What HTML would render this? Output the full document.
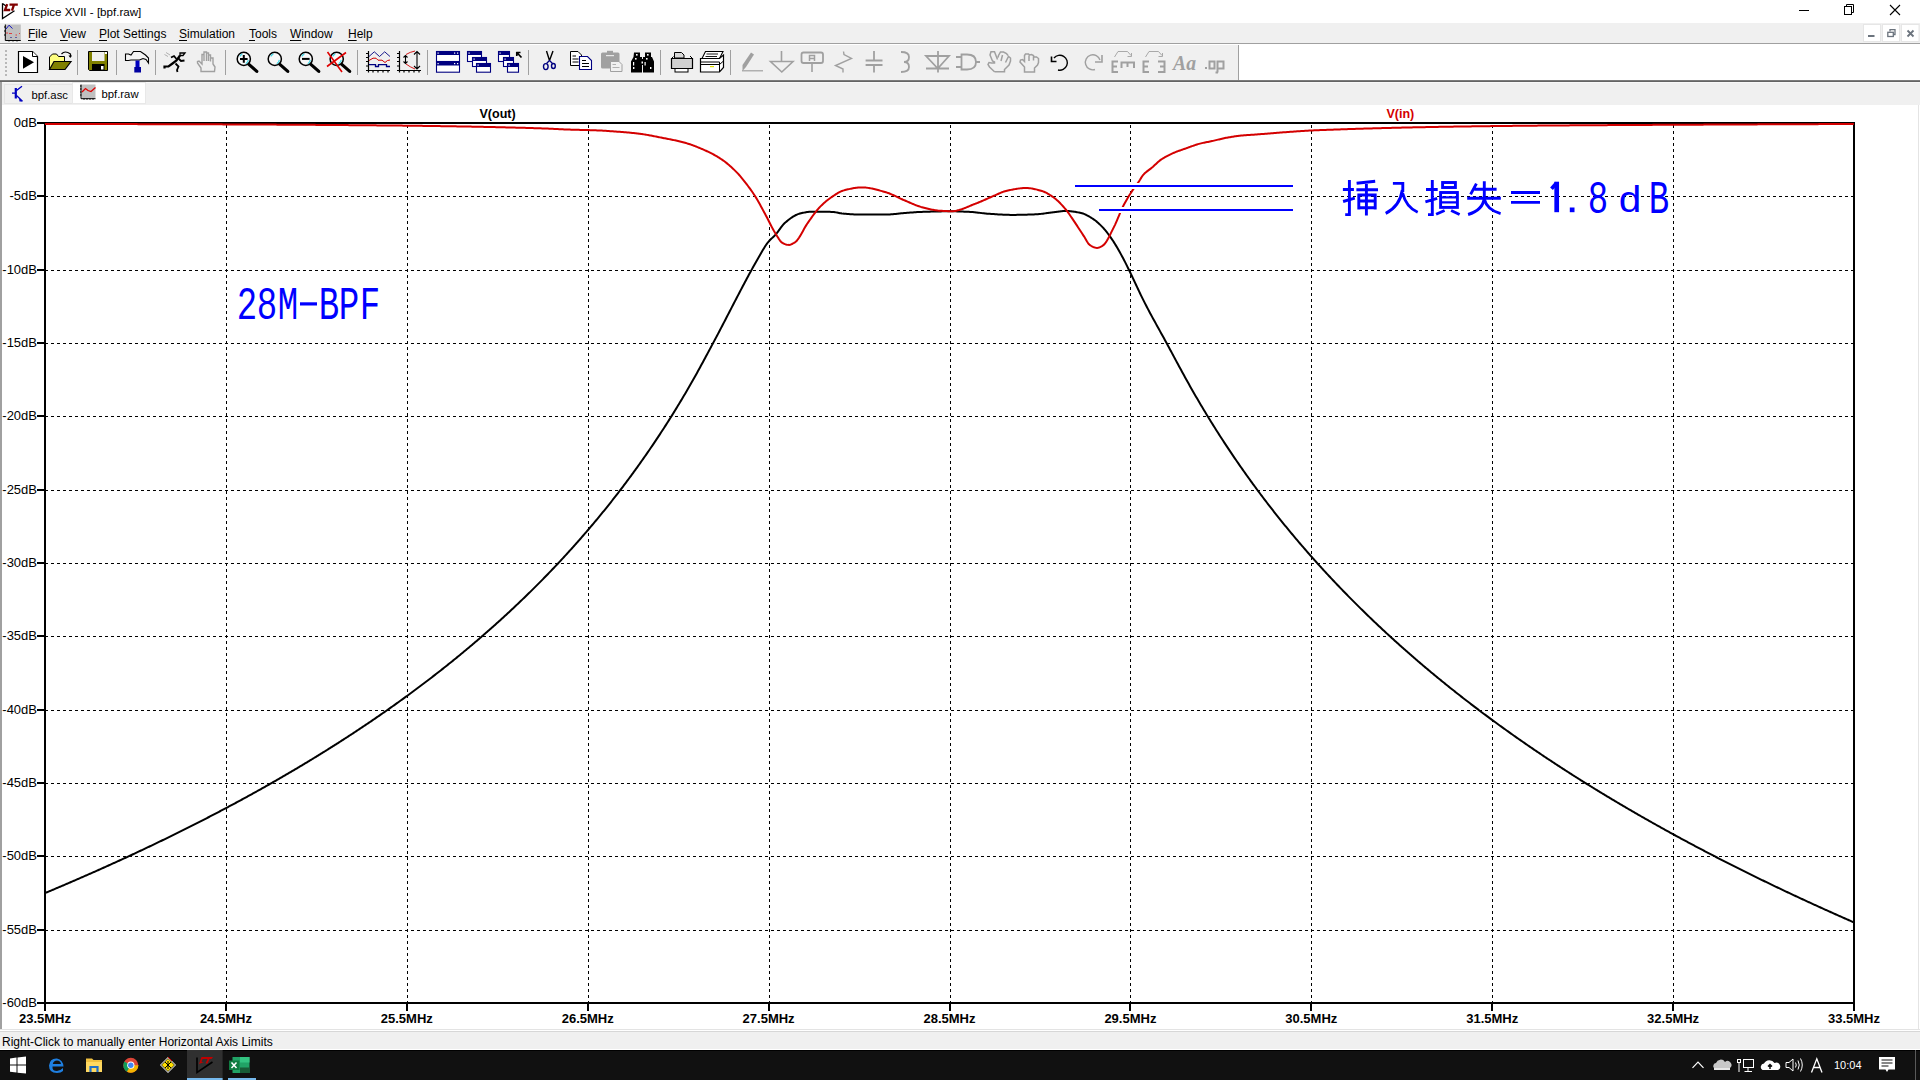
<!DOCTYPE html>
<html><head><meta charset="utf-8"><style>
html,body{margin:0;padding:0}
body{width:1920px;height:1080px;overflow:hidden;position:relative;background:#fff;font-family:"Liberation Sans",sans-serif}
.abs{position:absolute}
.yl{position:absolute;left:0;width:37px;text-align:right;font-size:13px;line-height:16px;color:#000}
.xl{position:absolute;top:1011px;width:80px;text-align:center;font-size:13px;font-weight:bold;line-height:16px;color:#000}
.g{stroke:#000;stroke-width:1;stroke-dasharray:3 3;shape-rendering:crispEdges}
.menu{position:absolute;top:25.5px;font-size:12px;line-height:16px;color:#000}
.menu u{text-decoration:underline;text-decoration-thickness:1px;text-underline-offset:1.5px}
.big{position:absolute;width:20.5px;text-align:center;font-family:"Liberation Mono",monospace;font-size:46px;line-height:50px;color:#00f;transform:scaleX(0.74);transform-origin:50% 50%}
</style></head><body>
<div class="abs" style="left:0;top:23px;width:1920px;height:20px;background:#f0f0f0;border-bottom:1px solid #a0a0a0"></div>
<div class="abs" style="left:0;top:45px;width:1238px;height:35px;background:#f0f0f0;border-right:1px solid #a0a0a0"></div>
<div class="abs" style="left:0;top:80px;width:1920px;height:1px;background:#7c7c7c"></div>
<div class="abs" style="left:0;top:81px;width:1920px;height:1px;background:#646464"></div>
<div class="abs" style="left:0;top:82px;width:1920px;height:1px;background:#f8f8f8"></div>
<div class="abs" style="left:0;top:83px;width:1920px;height:22px;background:#f0f0f0"></div>
<div class="abs" style="left:0;top:82px;width:2px;height:947px;background:#a0a0a0"></div>
<div class="abs" style="left:1918px;top:105px;width:1px;height:925px;background:#e4e4e4"></div>
<div class="abs" style="left:0;top:1029px;width:1920px;height:1px;background:#e3e3e3"></div>
<div class="abs" style="left:0;top:1030px;width:1920px;height:1px;background:#fff"></div>
<div class="abs" style="left:0;top:1031px;width:1920px;height:1px;background:#d7d7d7"></div>
<div class="abs" style="left:0;top:1032px;width:1920px;height:17px;background:#f0f0f0"></div>
<div class="abs" style="left:0;top:1050px;width:1920px;height:1px;background:#000"></div>
<div class="abs" style="left:0;top:1051px;width:1920px;height:29px;background:#111"></div>
<div class="abs" style="left:23px;top:4px;font-size:11.6px;line-height:16px;color:#000">LTspice XVII - [bpf.raw]</div>
<div class="menu" style="left:28px"><u>F</u>ile</div>
<div class="menu" style="left:60px"><u>V</u>iew</div>
<div class="menu" style="left:99px"><u>P</u>lot Settings</div>
<div class="menu" style="left:179px"><u>S</u>imulation</div>
<div class="menu" style="left:249px"><u>T</u>ools</div>
<div class="menu" style="left:290px"><u>W</u>indow</div>
<div class="menu" style="left:348px"><u>H</u>elp</div>
<div class="abs" style="left:2px;top:1034px;font-size:12px;line-height:16px;color:#000">Right-Click to manually enter Horizontal Axis Limits</div>
<div class="abs" style="left:1834px;top:1058px;font-size:11px;line-height:14px;color:#fff">10:04</div>
<svg class="abs" style="left:0;top:0" width="1920" height="1080" viewBox="0 0 1920 1080">
<rect x="5" y="50" width="2" height="2" fill="#b8b8b8"/>
<rect x="5" y="54" width="2" height="2" fill="#b8b8b8"/>
<rect x="5" y="58" width="2" height="2" fill="#b8b8b8"/>
<rect x="5" y="62" width="2" height="2" fill="#b8b8b8"/>
<rect x="5" y="66" width="2" height="2" fill="#b8b8b8"/>
<rect x="5" y="70" width="2" height="2" fill="#b8b8b8"/>
<rect x="5" y="74" width="2" height="2" fill="#b8b8b8"/>
<path d="M18.5,51.5H32.5L37.5,56.5V72.5H18.5Z" fill="#fff" stroke="#000" stroke-width="1.2"/>
<path d="M32.5,51.5V56.5H37.5" fill="#fff" stroke="#000" stroke-width="1"/>
<path d="M23,56L34,62.3L23,68.8Z" fill="#000"/>
<path d="M49.5,69.5V57L52.5,54H56.5L58.5,56.5H64.5V61.5" fill="#ffff80" stroke="#000" stroke-width="1"/>
<path d="M49.5,69.5L54,61.5H71L65,69.5Z" fill="#808000" stroke="#000" stroke-width="1.2"/>
<path d="M61.5,54Q65,50 70.5,54V57" fill="none" stroke="#000" stroke-width="1.2"/>
<path d="M68.5,55.5H72L70.3,58Z" fill="#000"/>
<rect x="77" y="50" width="1" height="25" fill="#a0a0a0"/>
<path d="M88.5,51.5H107.5V70.5H89.5L88.5,69.5Z" fill="#808000" stroke="#000" stroke-width="1"/>
<rect x="92" y="52" width="12.5" height="9" fill="#f0f0f0"/>
<rect x="92" y="64" width="12.5" height="6.5" fill="#000"/>
<rect x="101" y="66" width="2.5" height="3.5" fill="#fff"/>
<rect x="105" y="52" width="2" height="2" fill="#fff"/>
<rect x="116" y="50" width="1" height="25" fill="#a0a0a0"/>
<path d="M125.5,54H128.5L131,55L133.5,51.5H140.5L145.5,55L148.5,58L148.5,63L146,59.5L143,58.5L139.5,60H131L128.5,60.5H125.5Z" fill="#f4f4f4" stroke="#000" stroke-width="1.1"/>
<rect x="135.5" y="60.5" width="4" height="7" fill="#0000c0"/>
<rect x="134.3" y="67" width="6.7" height="5.5" fill="#0000a0"/>
<rect x="155" y="50" width="1" height="25" fill="#a0a0a0"/>
<path d="M180,53H185L183,55.5H180Z" fill="#fff" stroke="#000" stroke-width="1.3"/>
<path d="M180,55.5L176.5,60.5L172.5,63.5L168.5,66.5H164.5V68.5" fill="none" stroke="#000" stroke-width="2.2"/>
<path d="M171,57.5L174,56L176.5,59M178.5,58.5L181,61L184.5,60.5M175.5,63.5L178.5,66.5L177,70L177.5,72" fill="none" stroke="#000" stroke-width="1.8"/>
<path d="M164.5,54.5L168,56.5M166,52.5L170,55" stroke="#a0a0a0" stroke-width="0.8"/>
<path d="M201,71.5V68L197.5,63V61.5L199,61L202,64V54.5H204V61V52H206.5V61V53H208.5V61V55H210.5V61.5V58H213V64L215,67L214.5,71.5Z" fill="none" stroke="#a0a0a0" stroke-width="1.4"/>
<rect x="225" y="50" width="1" height="25" fill="#a0a0a0"/>
<path d="M248.3,63.9L256.8,71.4" stroke="#000" stroke-width="3.2" stroke-linecap="round"/>
<circle cx="243.8" cy="58.9" r="6.6" fill="#f8f8f8" stroke="#000" stroke-width="1.5"/>
<path d="M239.8,56.4A5,5 0 0 1 242.3,54.1M248.3,59.9A5,5 0 0 1 245.8,63.699999999999996" fill="none" stroke="#40d8e8" stroke-width="1.2"/><path d="M240,58.9H247.6M243.8,55.1V62.7" stroke="#000" stroke-width="2"/>
<path d="M279.3,63.9L287.8,71.4" stroke="#000" stroke-width="3.2" stroke-linecap="round"/>
<circle cx="274.8" cy="58.9" r="6.6" fill="#f8f8f8" stroke="#000" stroke-width="1.5"/>
<path d="M270.8,56.4A5,5 0 0 1 273.3,54.1M279.3,59.9A5,5 0 0 1 276.8,63.699999999999996" fill="none" stroke="#40d8e8" stroke-width="1.2"/>
<path d="M310.3,63.9L318.8,71.4" stroke="#000" stroke-width="3.2" stroke-linecap="round"/>
<circle cx="305.8" cy="58.9" r="6.6" fill="#f8f8f8" stroke="#000" stroke-width="1.5"/>
<path d="M301.8,56.4A5,5 0 0 1 304.3,54.1M310.3,59.9A5,5 0 0 1 307.8,63.699999999999996" fill="none" stroke="#40d8e8" stroke-width="1.2"/><path d="M302,58.9H309.6" stroke="#000" stroke-width="2"/>
<path d="M341.2,63.9L349.7,71.4" stroke="#000" stroke-width="3.2" stroke-linecap="round"/>
<circle cx="336.7" cy="58.9" r="6.6" fill="#f8f8f8" stroke="#000" stroke-width="1.5"/>
<path d="M332.7,56.4A5,5 0 0 1 335.2,54.1M341.2,59.9A5,5 0 0 1 338.7,63.699999999999996" fill="none" stroke="#40d8e8" stroke-width="1.2"/><path d="M327.5,52L342,72M346,52.5L327,66.5" stroke="#e00000" stroke-width="1.6"/>
<rect x="357" y="50" width="1" height="25" fill="#a0a0a0"/>
<path d="M368.5,51V72.5M366,70.5H390M366,53.5H368.5M366,57.5H368.5M366,61.5H368.5M366,66H368.5M373,70.5V72.5M378,70.5V72.5M383,70.5V72.5M388,70.5V72.5" stroke="#000" stroke-width="1.2" fill="none"/>
<path d="M369,56.5L374.3,51.8L379.5,56.5L384.7,51.8L390,56.5" stroke="#000080" stroke-width="0.9" fill="none"/>
<path d="M369,60.5L373,58.2H376L378,60.2H382L385,62.5L387.5,60.5L390,60" stroke="#d00000" stroke-width="1" fill="none"/>
<path d="M369,64.6H375.5V66.5H378.5V64.6H386.5V66.5H390" stroke="#000080" stroke-width="1.3" fill="none"/>
<path d="M399.5,51V72.5M397,70.5H421M397,53.5H399.5M397,57.5H399.5M397,61.5H399.5M397,66H399.5M404,70.5V72.5M409,70.5V72.5M414,70.5V72.5M419,70.5V72.5" stroke="#000" stroke-width="1.2" fill="none"/>
<path d="M406,54.5Q410,52 415,51M406,64Q410,67 415,69" stroke="#d00000" stroke-width="0.9" fill="none"/>
<path d="M405.5,55.5V63.5M403.5,57.5L405.5,55.5L407.5,57.5M403.5,61.5L405.5,63.5L407.5,61.5M417,51.5V69M414,54.5L417,51.5L420,54.5M414,66L417,69L420,66" stroke="#000" stroke-width="1.1" fill="none"/>
<rect x="427" y="50" width="1" height="25" fill="#a0a0a0"/>
<rect x="436.5" y="51.5" width="23" height="10" fill="#fff" stroke="#000080" stroke-width="1.1"/><rect x="436" y="51" width="24" height="4" fill="#000080"/><rect x="437.5" y="52.5" width="1.2" height="1.2" fill="#fff"/><rect x="436.5" y="62.0" width="23" height="10.2" fill="#fff" stroke="#000080" stroke-width="1.1"/><rect x="436" y="61.5" width="24" height="4" fill="#000080"/><rect x="437.5" y="63.0" width="1.2" height="1.2" fill="#fff"/><rect x="454" y="52.5" width="1.2" height="1.2" fill="#fff"/><rect x="457" y="52.5" width="1.2" height="1.2" fill="#fff"/><rect x="454" y="63" width="1.2" height="1.2" fill="#fff"/><rect x="457" y="63" width="1.2" height="1.2" fill="#fff"/>
<rect x="467.5" y="51.5" width="14" height="10" fill="#fff" stroke="#000080" stroke-width="1.1"/><rect x="467" y="51" width="15" height="4" fill="#000080"/><rect x="468.5" y="52.5" width="1.2" height="1.2" fill="#fff"/><rect x="472.5" y="57.5" width="14" height="9" fill="#fff" stroke="#000080" stroke-width="1.1"/><rect x="472" y="57" width="15" height="4" fill="#000080"/><rect x="473.5" y="58.5" width="1.2" height="1.2" fill="#fff"/><rect x="476.5" y="63.5" width="14" height="8.7" fill="#fff" stroke="#000080" stroke-width="1.1"/><rect x="476" y="63" width="15" height="4" fill="#000080"/><rect x="477.5" y="64.5" width="1.2" height="1.2" fill="#fff"/>
<rect x="498.5" y="51.5" width="11" height="10" fill="#fff" stroke="#000080" stroke-width="1.1"/><rect x="498" y="51" width="12" height="4" fill="#000080"/><rect x="499.5" y="52.5" width="1.2" height="1.2" fill="#fff"/><rect x="503.5" y="57.5" width="10" height="9" fill="#fff" stroke="#000080" stroke-width="1.1"/><rect x="503" y="57" width="11" height="4" fill="#000080"/><rect x="504.5" y="58.5" width="1.2" height="1.2" fill="#fff"/><rect x="507.5" y="63.5" width="11" height="8.7" fill="#fff" stroke="#000080" stroke-width="1.1"/><rect x="507" y="63" width="12" height="4" fill="#000080"/><rect x="508.5" y="64.5" width="1.2" height="1.2" fill="#fff"/><path d="M516.8,52.5L521.5,57.5M516.8,52V56M516.3,52.5H520.5" stroke="#000" stroke-width="1.7" fill="none"/>
<rect x="528" y="50" width="1" height="25" fill="#a0a0a0"/>
<path d="M546.5,51L549.5,60.5M553,51L549.5,60.5" stroke="#000" stroke-width="1.4" fill="none"/>
<ellipse cx="545.8" cy="66.6" rx="2.3" ry="3" fill="none" stroke="#000080" stroke-width="1.4"/>
<ellipse cx="553.4" cy="66" rx="1.9" ry="2.5" fill="none" stroke="#000080" stroke-width="1.4"/>
<path d="M549.5,60.5L546.5,63.5M549.5,60.5L552.5,63.5" stroke="#000080" stroke-width="1.3"/>
<path d="M570.5,51.5H578L581.5,55V65.5H570.5Z" fill="#fff" stroke="#000" stroke-width="1"/>
<path d="M572.5,56H576M572.5,59H578.5M572.5,62H578.5" stroke="#000" stroke-width="1.2"/>
<path d="M579.5,56.5H587.5L591.5,60.5V69.5H579.5Z" fill="#fff" stroke="#000080" stroke-width="1.1"/>
<path d="M582,60.5H586M582,63.5H589M582,66.5H589" stroke="#000" stroke-width="1.2"/>
<rect x="601" y="52.5" width="18.5" height="16" rx="1.5" fill="#a0a0a0"/>
<rect x="607" y="50.8" width="6" height="2.5" fill="#a0a0a0"/>
<rect x="606" y="55" width="8" height="1.2" fill="#e8e8e8"/>
<path d="M610.5,61.5H619L622,64.5V71.5H610.5Z" fill="#f0f0f0" stroke="#a0a0a0" stroke-width="1"/>
<path d="M612.5,64.5H616M612.5,67.5H619.5" stroke="#a0a0a0" stroke-width="0.8"/>
<path d="M634,52.5H640V57H642V72.5H631V61.5L633.5,57Z" fill="#000"/>
<path d="M645,52.5H651V57L652,57L654,61.5V72.5H643V57H645Z" fill="#000"/>
<rect x="640" y="59" width="5" height="6" fill="#000"/>
<rect x="636" y="54" width="1.6" height="1.6" fill="#fff"/><rect x="647" y="54" width="1.6" height="1.6" fill="#fff"/>
<rect x="635" y="58" width="1.6" height="1.6" fill="#fff"/><rect x="646" y="58" width="1.6" height="1.6" fill="#fff"/>
<rect x="633" y="62" width="1.2" height="3.5" fill="#fff"/><rect x="644.5" y="62" width="1.2" height="3.5" fill="#fff"/><rect x="641.5" y="61.5" width="1.5" height="2" fill="#fff"/>
<rect x="633" y="67" width="1.4" height="2" fill="#fff"/><rect x="650" y="67" width="1.4" height="2" fill="#fff"/>
<rect x="660" y="50" width="1" height="25" fill="#a0a0a0"/>
<path d="M674.5,52.5H681.5L684,55V58H674.5Z" fill="#d8d8d8" stroke="#000" stroke-width="1"/>
<path d="M671.5,58.5H692.5V68.5H671.5Z" fill="#d0d0d0" stroke="#000" stroke-width="1.2"/>
<path d="M671.5,58.5L673.5,56.5M692.5,58.5L690,56" stroke="#000" stroke-width="1"/>
<rect x="675" y="68.5" width="13" height="3.5" fill="#fff" stroke="#000" stroke-width="1"/>
<path d="M705.5,51.5H723L719.5,58.5H702Z" fill="#fff" stroke="#000" stroke-width="1.1"/>
<path d="M706.5,54H718M705.5,56.5H717" stroke="#000" stroke-width="0.9"/>
<path d="M700.5,58.5H719.5L723.5,55V67.5L719.5,72H700.5Z" fill="#fff" stroke="#000" stroke-width="1.2"/>
<path d="M700.5,64.5H719.5L723.5,61M700.5,62H719.5V72" stroke="#000" stroke-width="1" fill="none"/>
<rect x="710" y="66" width="4" height="1.2" fill="#e0e000"/>
<rect x="730" y="50" width="1" height="25" fill="#a0a0a0"/>
<path d="M742.5,71V65L751,52.5L754,54.5L746,67Z" fill="#a0a0a0"/>
<path d="M742,70.8H763" stroke="#a0a0a0" stroke-width="1.2"/>
<path d="M781.5,51V61M770.5,61.5H793L781.8,72Z" fill="none" stroke="#a0a0a0" stroke-width="1.6"/>
<rect x="801.5" y="52.5" width="21.5" height="10.5" rx="2" fill="none" stroke="#a0a0a0" stroke-width="1.8"/>
<path d="M812,63V72" stroke="#a0a0a0" stroke-width="1.6"/>
<path d="M809.5,61V55.5H814.5V61M809.5,58.5H814.5" fill="none" stroke="#a0a0a0" stroke-width="1.5"/>
<path d="M843.5,51.5L844,54.5L851.5,58.5L835.5,65.5L843,69V72.5" fill="none" stroke="#a0a0a0" stroke-width="1.4"/>
<path d="M874,51V60M874,65V72.5M865.6,60.5H882.5M865.6,65H882.5" fill="none" stroke="#a0a0a0" stroke-width="1.8"/>
<path d="M901,52Q909,52 909,57Q909,62 904,62Q909,62 909,67Q909,72 901,72" fill="none" stroke="#a0a0a0" stroke-width="1.8"/>
<path d="M938,51V72.5M926,56H949L937.8,68.5Z M926,68.5H949" fill="none" stroke="#a0a0a0" stroke-width="1.8"/>
<path d="M956,57H961M956,67H961M961.5,54.5H967Q976,54.5 976,62Q976,69.5 967,69.5H961.5Z M976,62H980" fill="none" stroke="#a0a0a0" stroke-width="1.8"/>
<path d="M994.5,71.8H1004.5V69.5L1009,65L1010.5,61V58L1008.5,56.5L1005.5,62.5M1008,55.5L1006.5,53.5L1003.5,52H1000.5L998.5,55.5L998,57.5M1002.5,55L1001,61M997.5,59.5L994.5,51.8H991L990,55L992.5,61L994.5,62V63H991.5L989,62.5L988,64.5L989.5,67L994.5,71.8" fill="none" stroke="#a0a0a0" stroke-width="1.5"/>
<path d="M1024.5,72H1034.5V68L1037.5,65L1038.5,62.5V58.5L1036.5,57H1034L1033.5,55.5L1031.5,54.5L1029.5,55L1028.5,54H1025.5L1024.5,55.5V61.5L1022.5,59.5L1020.5,60L1020,62L1024.5,67Z M1029,55.5V61M1033.5,56V60.5" fill="none" stroke="#a0a0a0" stroke-width="1.5"/>
<path d="M1054,58A7.5,7.5 0 1 1 1058,70" fill="none" stroke="#000" stroke-width="1.4"/>
<path d="M1051.5,56.5V61.5H1056.5" fill="none" stroke="#000" stroke-width="1.6"/>
<path d="M1100,60A7.5,7.5 0 1 0 1095,69.5" fill="none" stroke="#a0a0a0" stroke-width="1.4"/>
<path d="M1102,55V62H1095" fill="none" stroke="#a0a0a0" stroke-width="1.6"/>
<path d="M1114.5,57L1118,51.5H1127.5L1131,55.5M1127.5,56.5H1131.5V53" fill="none" stroke="#a0a0a0" stroke-width="0.9"/>
<path d="M1118,61.5H1112.5V72H1118M1112.5,66.5H1117" fill="none" stroke="#a0a0a0" stroke-width="2"/>
<path d="M1121.5,68V62.5H1134V68M1127.5,62.5V67" fill="none" stroke="#a0a0a0" stroke-width="2"/>
<path d="M1145.5,57L1149,51.5H1158.5L1162,55.5M1158.5,56.5H1162.5V53" fill="none" stroke="#a0a0a0" stroke-width="0.9"/>
<path d="M1149,61.5H1143.5V72H1149M1143.5,66.5H1148" fill="none" stroke="#a0a0a0" stroke-width="2"/>
<path d="M1158,61.5H1164.5V72H1158M1164.5,66.5H1160" fill="none" stroke="#a0a0a0" stroke-width="2"/>
<text x="1173" y="69.8" font-family="Liberation Serif" font-style="italic" font-weight="bold" font-size="20" fill="#a0a0a0" textLength="23" lengthAdjust="spacingAndGlyphs">Aa</text>
<rect x="1205" y="67" width="2" height="2" fill="#a0a0a0"/>
<rect x="1209.5" y="61.5" width="5" height="7" fill="none" stroke="#a0a0a0" stroke-width="2"/>
<path d="M1217.5,72.5V61.5H1223.5V68.5H1217.5M1215.5,72.5H1218" fill="none" stroke="#a0a0a0" stroke-width="2"/>
<path d="M2.5,3.2V18.5L14.5,10.8M2.5,3.5L6,6" fill="none" stroke="#000" stroke-width="1.3"/>
<path d="M7.2,4.2L5,10H10.2" fill="none" stroke="#800000" stroke-width="2.3"/>
<path d="M9.5,4.6H17.8M14,4.6L12,10.6" fill="none" stroke="#800000" stroke-width="2.3"/>
<rect x="5" y="24.5" width="15.8" height="16" fill="#c0c0c0"/>
<path d="M5.3,24.5V40.5H20.8M4,27H5.5M4,31H5.5M4,35H5.5M9,40.5V41.5M13,40.5V41.5M17,40.5V41.5" stroke="#000" stroke-width="1" fill="none"/>
<path d="M6,29L9,25.2L12.5,28.5" stroke="#0000c0" stroke-width="0.9" fill="none"/>
<path d="M6,33H8M9,33.5H12M15.5,35H17M19,33.5H20" stroke="#e04040" stroke-width="1" fill="none"/>
<rect x="10.5" y="37" width="1" height="1" fill="#000080"/><rect x="15.5" y="37" width="1" height="1" fill="#000080"/>
<path d="M1799,10.5H1809" stroke="#000" stroke-width="1"/>
<rect x="1844.5" y="6.5" width="7" height="8" fill="none" stroke="#000" stroke-width="1"/>
<path d="M1846.5,6V4.5H1853.5V12.5H1852" fill="none" stroke="#000" stroke-width="1"/>
<path d="M1890,5L1900,15M1900,5L1890,15" stroke="#000" stroke-width="1.1"/>
<rect x="1863.5" y="24.5" width="17" height="17" fill="#fff" stroke="#e6e6e6" stroke-width="1"/>
<rect x="1882.5" y="24.5" width="17" height="17" fill="#fff" stroke="#e6e6e6" stroke-width="1"/>
<rect x="1901.5" y="24.5" width="17.5" height="17" fill="#fff" stroke="#e6e6e6" stroke-width="1"/>
<rect x="1868" y="35" width="6.5" height="2" fill="#6b737d"/>
<rect x="1887.8" y="32.3" width="5.5" height="4.2" fill="none" stroke="#6b737d" stroke-width="1.3"/>
<path d="M1890,31.5V29.7H1895V34.5H1893.5" fill="none" stroke="#6b737d" stroke-width="1.3"/>
<path d="M1907.5,30.5L1913.5,36.5M1913.5,30.5L1907.5,36.5" stroke="#6b737d" stroke-width="1.8"/>
<rect x="4.5" y="84.5" width="68" height="19" fill="#f0f0f0" stroke="#e4e4e4" stroke-width="1"/>
<rect x="72.5" y="82.5" width="73" height="21" fill="#fff" stroke="#e8e8e8" stroke-width="1"/>
<path d="M15.8,88V98.5" stroke="#0000c0" stroke-width="2.2"/><path d="M12,93.2H15.8M16.5,90.5L22,86.2M16.5,95.5L22.5,101.2" stroke="#0000c0" stroke-width="1.3" fill="none"/>
<path d="M19,98.5L22.5,101.5L19.5,101.5Z" fill="#0000c0"/>
<rect x="81.5" y="84.5" width="14" height="14" fill="#c0c0c0"/>
<path d="M81,84.5V98.7H95.5M80,86H81.5M80,89H81.5M80,92H81.5M80,95H81.5M84,98.5V99.8M87,98.5V99.8M90,98.5V99.8M93,98.5V99.8" stroke="#000" stroke-width="1" fill="none"/>
<path d="M82,92L85.5,88.5L88,90.5L91,91.5L95.5,87.5" stroke="#e00000" stroke-width="1.3" fill="none"/>
<path d="M10,1058.5L16.5,1057.6V1064.6H10Z M17.5,1057.4L26,1056.5V1064.6H17.5Z M10,1065.6H16.5V1072.6L10,1071.7Z M17.5,1065.6H26V1073.5L17.5,1072.7Z" fill="#fff"/>
<path d="M63.5,1066.5Q63,1060 57,1058.5Q50,1058 49,1065.5Q49,1073 57,1073Q61,1073 63,1071V1068Q60,1071 57,1071Q52,1071 52.5,1066.5H63.5Z M52.8,1064Q53.5,1060.5 57,1060.5Q60.5,1060.5 61,1064Z" fill="#1f7fe0"/>
<path d="M86,1058.5H92L93.5,1060H102V1072H86Z" fill="#f0c040"/>
<rect x="86" y="1062" width="16" height="10" fill="#ffd860"/>
<path d="M90.5,1072V1067H97.5V1072" fill="none" stroke="#1f70c8" stroke-width="2.2"/>
<circle cx="130.8" cy="1065.2" r="7.5" fill="#db4437"/>
<path d="M130.8,1065.2L124.3,1061.5A7.5,7.5 0 0 0 127,1071.7Z" fill="#0f9d58"/>
<path d="M130.8,1065.2L127,1071.7A7.5,7.5 0 0 0 138.3,1065.2Z" fill="#f4b400"/>
<circle cx="130.8" cy="1065.2" r="3.6" fill="#fff"/><circle cx="130.8" cy="1065.2" r="2.7" fill="#4285f4"/>
<path d="M168,1057L176,1065L168,1073L160,1065Z" fill="#fff"/>
<path d="M168,1058.5L174.5,1065L168,1071.5L161.5,1065Z" fill="#ffe000" stroke="#000" stroke-width="0.8"/>
<path d="M165,1062L171,1068M171,1062L165,1068M168,1061V1069" stroke="#000" stroke-width="1"/>
<path d="M168,1057L172,1061" stroke="#d00000" stroke-width="1"/>
<rect x="187" y="1050" width="35.6" height="30" fill="#303030"/>
<rect x="187" y="1078" width="35.6" height="2" fill="#76b9ed"/>
<path d="M197,1057.5V1072.5L212.5,1062" fill="none" stroke="#000" stroke-width="1.6"/>
<path d="M199,1064L201.5,1057H205.5L204,1059H202.5L201.5,1062H204Z M204,1057H213L211.5,1059H209.5L207.5,1063.5H205.5L207.5,1059H204Z" fill="#c00000"/>
<rect x="232.5" y="1057" width="17" height="16" fill="#21a366"/>
<rect x="240" y="1057" width="9.5" height="5.5" fill="#33c481"/>
<rect x="240" y="1067.5" width="9.5" height="5.5" fill="#185c37"/>
<rect x="229" y="1060.5" width="10.5" height="9.5" fill="#107c41"/>
<path d="M231.5,1062.5L236.5,1068M236.5,1062.5L231.5,1068" stroke="#fff" stroke-width="1.5"/>
<rect x="228" y="1078" width="28" height="2" fill="#76b9ed"/>
<path d="M1692.5,1067.8L1698,1062.2L1703.5,1067.8" fill="none" stroke="#fff" stroke-width="1.2"/>
<path d="M1714,1068A3,3 0 0 1 1716,1063A5,5 0 0 1 1725,1062A3.5,3.5 0 0 1 1730,1068Z" fill="#c8c8c8"/>
<path d="M1714,1070H1730V1068H1714Z" fill="#e8e8e8"/>
<rect x="1743.5" y="1059.5" width="10" height="8" fill="none" stroke="#fff" stroke-width="1"/>
<rect x="1737.5" y="1059.5" width="3" height="3" fill="none" stroke="#fff" stroke-width="1"/>
<path d="M1739,1062.5V1072M1744.5,1071.5H1752M1748,1067.5V1071.5" stroke="#fff" stroke-width="1"/>
<path d="M1762.5,1070A3.5,3.5 0 0 1 1764,1063.5A6,6 0 0 1 1774.5,1063A3.5,3.5 0 0 1 1778,1070Z" fill="#fff"/>
<path d="M1770,1069V1065M1768,1066.5L1770,1064.5L1772,1066.5" stroke="#111" stroke-width="1.5" fill="none"/>
<path d="M1786,1062.5H1789L1793,1059V1071L1789,1067.5H1786Z" fill="none" stroke="#fff" stroke-width="1"/>
<path d="M1795.5,1062.5Q1797,1065 1795.5,1067.5M1798,1060.5Q1800.5,1065 1798,1069.5M1800.5,1058.5Q1804,1065 1800.5,1071.5" fill="none" stroke="#fff" stroke-width="1"/>
<path d="M1811.5,1072.5L1816.8,1058.8L1822,1072.5M1813.5,1067.5H1820" fill="none" stroke="#fff" stroke-width="1.3"/>
<path d="M1879,1057H1895V1069.5H1888.5L1887,1072L1885.5,1069.5H1879Z" fill="#fff"/>
<path d="M1881.5,1060H1892.5M1881.5,1063H1892.5M1881.5,1066H1888.5" stroke="#111" stroke-width="1"/>
<rect x="1915" y="1050" width="1" height="30" fill="#5a5a5a"/>
<line x1="226.5" y1="125" x2="226.5" y2="1002" class="g"/>
<line x1="407.5" y1="125" x2="407.5" y2="1002" class="g"/>
<line x1="588.5" y1="125" x2="588.5" y2="1002" class="g"/>
<line x1="769.5" y1="125" x2="769.5" y2="1002" class="g"/>
<line x1="950.5" y1="125" x2="950.5" y2="1002" class="g"/>
<line x1="1130.5" y1="125" x2="1130.5" y2="1002" class="g"/>
<line x1="1311.5" y1="125" x2="1311.5" y2="1002" class="g"/>
<line x1="1492.5" y1="125" x2="1492.5" y2="1002" class="g"/>
<line x1="1673.5" y1="125" x2="1673.5" y2="1002" class="g"/>
<line x1="45" y1="196.5" x2="1853" y2="196.5" class="g"/>
<line x1="45" y1="270.5" x2="1853" y2="270.5" class="g"/>
<line x1="45" y1="343.5" x2="1853" y2="343.5" class="g"/>
<line x1="45" y1="416.5" x2="1853" y2="416.5" class="g"/>
<line x1="45" y1="490.5" x2="1853" y2="490.5" class="g"/>
<line x1="45" y1="563.5" x2="1853" y2="563.5" class="g"/>
<line x1="45" y1="636.5" x2="1853" y2="636.5" class="g"/>
<line x1="45" y1="710.5" x2="1853" y2="710.5" class="g"/>
<line x1="45" y1="783.5" x2="1853" y2="783.5" class="g"/>
<line x1="45" y1="856.5" x2="1853" y2="856.5" class="g"/>
<line x1="45" y1="930.5" x2="1853" y2="930.5" class="g"/>
<path d="M45,123H1854V1003H45Z" fill="none" stroke="#000" stroke-width="2" shape-rendering="crispEdges"/>
<path d="M37,123H44 M37,196H44 M37,270H44 M37,343H44 M37,416H44 M37,490H44 M37,563H44 M37,636H44 M37,710H44 M37,783H44 M37,856H44 M37,930H44 M37,1003H44 M45,1004V1011 M226,1004V1011 M407,1004V1011 M588,1004V1011 M769,1004V1011 M950,1004V1011 M1130,1004V1011 M1311,1004V1011 M1492,1004V1011 M1673,1004V1011 M1854,1004V1011" stroke="#000" stroke-width="2" fill="none" shape-rendering="crispEdges"/>
<polyline points="45.0,893.09 46.0,892.67 47.0,892.25 48.0,891.83 49.0,891.41 50.0,890.99 51.0,890.57 52.0,890.14 53.0,889.72 54.0,889.30 55.0,888.88 56.0,888.45 57.0,888.03 58.0,887.61 59.0,887.18 60.0,886.76 61.0,886.33 62.0,885.90 63.0,885.48 64.0,885.05 65.0,884.62 66.0,884.19 67.0,883.76 68.0,883.33 69.0,882.90 70.0,882.47 71.0,882.04 72.0,881.61 73.0,881.18 74.0,880.75 75.0,880.31 76.0,879.88 77.0,879.45 78.0,879.01 79.0,878.58 80.0,878.14 81.0,877.70 82.0,877.27 83.0,876.83 84.0,876.39 85.0,875.95 86.0,875.52 87.0,875.08 88.0,874.64 89.0,874.20 90.0,873.76 91.0,873.31 92.0,872.87 93.0,872.43 94.0,871.99 95.0,871.54 96.0,871.10 97.0,870.65 98.0,870.21 99.0,869.76 100.0,869.32 101.0,868.87 102.0,868.42 103.0,867.97 104.0,867.53 105.0,867.08 106.0,866.63 107.0,866.18 108.0,865.73 109.0,865.27 110.0,864.82 111.0,864.37 112.0,863.92 113.0,863.46 114.0,863.01 115.0,862.55 116.0,862.10 117.0,861.64 118.0,861.19 119.0,860.73 120.0,860.27 121.0,859.81 122.0,859.35 123.0,858.89 124.0,858.43 125.0,857.97 126.0,857.51 127.0,857.05 128.0,856.59 129.0,856.12 130.0,855.66 131.0,855.20 132.0,854.73 133.0,854.27 134.0,853.80 135.0,853.33 136.0,852.87 137.0,852.40 138.0,851.93 139.0,851.46 140.0,850.99 141.0,850.52 142.0,850.05 143.0,849.58 144.0,849.11 145.0,848.63 146.0,848.16 147.0,847.69 148.0,847.21 149.0,846.74 150.0,846.26 151.0,845.78 152.0,845.31 153.0,844.83 154.0,844.35 155.0,843.87 156.0,843.39 157.0,842.91 158.0,842.43 159.0,841.95 160.0,841.47 161.0,840.98 162.0,840.50 163.0,840.02 164.0,839.53 165.0,839.04 166.0,838.56 167.0,838.07 168.0,837.58 169.0,837.10 170.0,836.61 171.0,836.12 172.0,835.63 173.0,835.14 174.0,834.64 175.0,834.15 176.0,833.66 177.0,833.16 178.0,832.67 179.0,832.18 180.0,831.68 181.0,831.18 182.0,830.69 183.0,830.19 184.0,829.69 185.0,829.19 186.0,828.69 187.0,828.19 188.0,827.69 189.0,827.19 190.0,826.68 191.0,826.18 192.0,825.68 193.0,825.17 194.0,824.66 195.0,824.16 196.0,823.65 197.0,823.14 198.0,822.63 199.0,822.13 200.0,821.62 201.0,821.10 202.0,820.59 203.0,820.08 204.0,819.57 205.0,819.05 206.0,818.54 207.0,818.02 208.0,817.51 209.0,816.99 210.0,816.47 211.0,815.96 212.0,815.44 213.0,814.92 214.0,814.40 215.0,813.88 216.0,813.35 217.0,812.83 218.0,812.31 219.0,811.78 220.0,811.26 221.0,810.73 222.0,810.20 223.0,809.68 224.0,809.15 225.0,808.62 226.0,808.09 227.0,807.56 228.0,807.03 229.0,806.49 230.0,805.96 231.0,805.43 232.0,804.89 233.0,804.36 234.0,803.82 235.0,803.28 236.0,802.75 237.0,802.21 238.0,801.67 239.0,801.13 240.0,800.59 241.0,800.04 242.0,799.50 243.0,798.96 244.0,798.41 245.0,797.87 246.0,797.32 247.0,796.77 248.0,796.22 249.0,795.68 250.0,795.13 251.0,794.58 252.0,794.02 253.0,793.47 254.0,792.92 255.0,792.36 256.0,791.81 257.0,791.25 258.0,790.70 259.0,790.14 260.0,789.58 261.0,789.02 262.0,788.46 263.0,787.90 264.0,787.34 265.0,786.78 266.0,786.21 267.0,785.65 268.0,785.08 269.0,784.51 270.0,783.95 271.0,783.38 272.0,782.81 273.0,782.24 274.0,781.67 275.0,781.10 276.0,780.52 277.0,779.95 278.0,779.37 279.0,778.80 280.0,778.22 281.0,777.64 282.0,777.06 283.0,776.48 284.0,775.90 285.0,775.32 286.0,774.74 287.0,774.16 288.0,773.57 289.0,772.99 290.0,772.40 291.0,771.81 292.0,771.22 293.0,770.63 294.0,770.04 295.0,769.45 296.0,768.86 297.0,768.27 298.0,767.67 299.0,767.08 300.0,766.48 301.0,765.88 302.0,765.28 303.0,764.68 304.0,764.08 305.0,763.48 306.0,762.88 307.0,762.28 308.0,761.67 309.0,761.07 310.0,760.46 311.0,759.85 312.0,759.24 313.0,758.63 314.0,758.02 315.0,757.41 316.0,756.80 317.0,756.18 318.0,755.57 319.0,754.95 320.0,754.33 321.0,753.71 322.0,753.09 323.0,752.47 324.0,751.85 325.0,751.23 326.0,750.60 327.0,749.98 328.0,749.35 329.0,748.72 330.0,748.10 331.0,747.47 332.0,746.84 333.0,746.20 334.0,745.57 335.0,744.94 336.0,744.30 337.0,743.66 338.0,743.03 339.0,742.39 340.0,741.75 341.0,741.11 342.0,740.46 343.0,739.82 344.0,739.17 345.0,738.53 346.0,737.88 347.0,737.23 348.0,736.58 349.0,735.93 350.0,735.28 351.0,734.63 352.0,733.97 353.0,733.32 354.0,732.66 355.0,732.00 356.0,731.34 357.0,730.68 358.0,730.02 359.0,729.36 360.0,728.69 361.0,728.03 362.0,727.36 363.0,726.69 364.0,726.02 365.0,725.35 366.0,724.68 367.0,724.00 368.0,723.33 369.0,722.65 370.0,721.98 371.0,721.30 372.0,720.62 373.0,719.94 374.0,719.25 375.0,718.57 376.0,717.88 377.0,717.20 378.0,716.51 379.0,715.82 380.0,715.13 381.0,714.44 382.0,713.74 383.0,713.05 384.0,712.35 385.0,711.65 386.0,710.95 387.0,710.25 388.0,709.55 389.0,708.85 390.0,708.14 391.0,707.44 392.0,706.73 393.0,706.02 394.0,705.31 395.0,704.60 396.0,703.89 397.0,703.17 398.0,702.45 399.0,701.74 400.0,701.02 401.0,700.30 402.0,699.57 403.0,698.85 404.0,698.12 405.0,697.40 406.0,696.67 407.0,695.94 408.0,695.21 409.0,694.48 410.0,693.74 411.0,693.01 412.0,692.27 413.0,691.53 414.0,690.79 415.0,690.05 416.0,689.30 417.0,688.56 418.0,687.81 419.0,687.06 420.0,686.31 421.0,685.56 422.0,684.81 423.0,684.05 424.0,683.29 425.0,682.54 426.0,681.78 427.0,681.01 428.0,680.25 429.0,679.49 430.0,678.72 431.0,677.95 432.0,677.18 433.0,676.41 434.0,675.63 435.0,674.86 436.0,674.08 437.0,673.30 438.0,672.52 439.0,671.74 440.0,670.96 441.0,670.17 442.0,669.38 443.0,668.60 444.0,667.80 445.0,667.01 446.0,666.22 447.0,665.42 448.0,664.62 449.0,663.82 450.0,663.02 451.0,662.22 452.0,661.41 453.0,660.60 454.0,659.80 455.0,658.98 456.0,658.17 457.0,657.36 458.0,656.54 459.0,655.72 460.0,654.90 461.0,654.08 462.0,653.25 463.0,652.43 464.0,651.60 465.0,650.77 466.0,649.94 467.0,649.10 468.0,648.26 469.0,647.43 470.0,646.59 471.0,645.74 472.0,644.90 473.0,644.05 474.0,643.20 475.0,642.35 476.0,641.50 477.0,640.65 478.0,639.79 479.0,638.93 480.0,638.07 481.0,637.21 482.0,636.34 483.0,635.47 484.0,634.60 485.0,633.73 486.0,632.86 487.0,631.98 488.0,631.10 489.0,630.22 490.0,629.34 491.0,628.46 492.0,627.57 493.0,626.68 494.0,625.79 495.0,624.89 496.0,624.00 497.0,623.10 498.0,622.20 499.0,621.30 500.0,620.39 501.0,619.48 502.0,618.57 503.0,617.66 504.0,616.75 505.0,615.83 506.0,614.91 507.0,613.99 508.0,613.06 509.0,612.14 510.0,611.21 511.0,610.27 512.0,609.34 513.0,608.40 514.0,607.46 515.0,606.52 516.0,605.58 517.0,604.63 518.0,603.68 519.0,602.73 520.0,601.78 521.0,600.82 522.0,599.86 523.0,598.90 524.0,597.93 525.0,596.96 526.0,595.99 527.0,595.02 528.0,594.05 529.0,593.07 530.0,592.09 531.0,591.10 532.0,590.12 533.0,589.13 534.0,588.14 535.0,587.14 536.0,586.14 537.0,585.14 538.0,584.14 539.0,583.13 540.0,582.12 541.0,581.11 542.0,580.10 543.0,579.08 544.0,578.06 545.0,577.04 546.0,576.01 547.0,574.98 548.0,573.95 549.0,572.91 550.0,571.87 551.0,570.83 552.0,569.79 553.0,568.74 554.0,567.69 555.0,566.63 556.0,565.58 557.0,564.52 558.0,563.45 559.0,562.39 560.0,561.32 561.0,560.24 562.0,559.17 563.0,558.09 564.0,557.01 565.0,555.92 566.0,554.83 567.0,553.74 568.0,552.64 569.0,551.54 570.0,550.44 571.0,549.33 572.0,548.22 573.0,547.11 574.0,545.99 575.0,544.87 576.0,543.75 577.0,542.62 578.0,541.49 579.0,540.36 580.0,539.22 581.0,538.08 582.0,536.93 583.0,535.78 584.0,534.63 585.0,533.47 586.0,532.31 587.0,531.15 588.0,529.98 589.0,528.81 590.0,527.63 591.0,526.45 592.0,525.27 593.0,524.08 594.0,522.89 595.0,521.70 596.0,520.50 597.0,519.29 598.0,518.09 599.0,516.88 600.0,515.66 601.0,514.44 602.0,513.22 603.0,511.99 604.0,510.76 605.0,509.52 606.0,508.28 607.0,507.04 608.0,505.79 609.0,504.53 610.0,503.28 611.0,502.01 612.0,500.75 613.0,499.48 614.0,498.20 615.0,496.92 616.0,495.64 617.0,494.35 618.0,493.05 619.0,491.76 620.0,490.45 621.0,489.15 622.0,487.83 623.0,486.52 624.0,485.19 625.0,483.87 626.0,482.53 627.0,481.20 628.0,479.86 629.0,478.51 630.0,477.16 631.0,475.80 632.0,474.44 633.0,473.07 634.0,471.70 635.0,470.32 636.0,468.94 637.0,467.55 638.0,466.16 639.0,464.76 640.0,463.36 641.0,461.95 642.0,460.54 643.0,459.12 644.0,457.69 645.0,456.26 646.0,454.82 647.0,453.38 648.0,451.93 649.0,450.48 650.0,449.02 651.0,447.55 652.0,446.08 653.0,444.60 654.0,443.12 655.0,441.63 656.0,440.14 657.0,438.63 658.0,437.13 659.0,435.61 660.0,434.09 661.0,432.57 662.0,431.03 663.0,429.49 664.0,427.95 665.0,426.40 666.0,424.84 667.0,423.27 668.0,421.70 669.0,420.12 670.0,418.54 671.0,416.94 672.0,415.35 673.0,413.74 674.0,412.13 675.0,410.51 676.0,408.88 677.0,407.25 678.0,405.60 679.0,403.96 680.0,402.30 681.0,400.64 682.0,398.97 683.0,397.29 684.0,395.60 685.0,393.91 686.0,392.21 687.0,390.50 688.0,388.79 689.0,387.07 690.0,385.34 691.0,383.60 692.0,381.84 693.0,380.07 694.0,378.29 695.0,376.51 696.0,374.71 697.0,372.90 698.0,371.08 699.0,369.26 700.0,367.43 701.0,365.60 702.0,363.75 703.0,361.91 704.0,360.06 705.0,358.20 706.0,356.34 707.0,354.48 708.0,352.61 709.0,350.75 710.0,348.88 711.0,347.01 712.0,345.14 713.0,343.27 714.0,341.40 715.0,339.53 716.0,337.64 717.0,335.75 718.0,333.85 719.0,331.95 720.0,330.04 721.0,328.13 722.0,326.21 723.0,324.29 724.0,322.36 725.0,320.43 726.0,318.50 727.0,316.57 728.0,314.64 729.0,312.71 730.0,310.77 731.0,308.84 732.0,306.91 733.0,304.97 734.0,303.04 735.0,301.11 736.0,299.19 737.0,297.27 738.0,295.35 739.0,293.43 740.0,291.52 741.0,289.61 742.0,287.71 743.0,285.82 744.0,283.93 745.0,282.05 746.0,280.17 747.0,278.31 748.0,276.45 749.0,274.60 750.0,272.76 751.0,270.93 752.0,269.11 753.0,267.30 754.0,265.50 755.0,263.72 756.0,261.96 757.0,260.23 758.0,258.52 759.0,256.79 760.0,255.03 761.0,253.28 762.0,251.53 763.0,249.82 764.0,248.15 765.0,246.55 766.0,245.02 767.0,243.59 768.0,242.27 769.0,241.08 770.0,240.02 771.0,239.04 772.0,238.11 773.0,237.19 774.0,236.25 775.0,235.24 776.0,234.13 777.0,232.90 778.0,231.58 779.0,230.21 780.0,228.81 781.0,227.43 782.0,226.11 783.0,224.87 784.0,223.75 785.0,222.79 786.0,221.94 787.0,221.11 788.0,220.30 789.0,219.51 790.0,218.75 791.0,218.02 792.0,217.33 793.0,216.68 794.0,216.07 795.0,215.51 796.0,215.01 797.0,214.56 798.0,214.16 799.0,213.84 800.0,213.57 801.0,213.32 802.0,213.07 803.0,212.83 804.0,212.61 805.0,212.41 806.0,212.22 807.0,212.06 808.0,211.92 809.0,211.82 810.0,211.74 811.0,211.70 812.0,211.70 813.0,211.70 814.0,211.70 815.0,211.71 816.0,211.71 817.0,211.71 818.0,211.72 819.0,211.73 820.0,211.73 821.0,211.74 822.0,211.75 823.0,211.76 824.0,211.77 825.0,211.79 826.0,211.80 827.0,211.82 828.0,211.83 829.0,211.85 830.0,211.87 831.0,211.88 832.0,211.91 833.0,211.96 834.0,212.06 835.0,212.20 836.0,212.37 837.0,212.56 838.0,212.75 839.0,212.96 840.0,213.15 841.0,213.33 842.0,213.49 843.0,213.62 844.0,213.72 845.0,213.79 846.0,213.87 847.0,213.94 848.0,214.02 849.0,214.09 850.0,214.15 851.0,214.22 852.0,214.28 853.0,214.34 854.0,214.39 855.0,214.44 856.0,214.48 857.0,214.51 858.0,214.55 859.0,214.57 860.0,214.59 861.0,214.60 862.0,214.60 863.0,214.60 864.0,214.60 865.0,214.60 866.0,214.60 867.0,214.60 868.0,214.60 869.0,214.60 870.0,214.60 871.0,214.60 872.0,214.60 873.0,214.60 874.0,214.60 875.0,214.60 876.0,214.60 877.0,214.60 878.0,214.60 879.0,214.60 880.0,214.60 881.0,214.60 882.0,214.60 883.0,214.60 884.0,214.60 885.0,214.60 886.0,214.60 887.0,214.58 888.0,214.55 889.0,214.50 890.0,214.44 891.0,214.37 892.0,214.28 893.0,214.19 894.0,214.09 895.0,213.98 896.0,213.88 897.0,213.76 898.0,213.65 899.0,213.54 900.0,213.44 901.0,213.34 902.0,213.24 903.0,213.15 904.0,213.08 905.0,213.00 906.0,212.93 907.0,212.85 908.0,212.77 909.0,212.69 910.0,212.61 911.0,212.54 912.0,212.46 913.0,212.39 914.0,212.31 915.0,212.25 916.0,212.18 917.0,212.12 918.0,212.06 919.0,212.01 920.0,211.97 921.0,211.92 922.0,211.89 923.0,211.86 924.0,211.82 925.0,211.79 926.0,211.76 927.0,211.73 928.0,211.70 929.0,211.67 930.0,211.64 931.0,211.61 932.0,211.58 933.0,211.56 934.0,211.53 935.0,211.51 936.0,211.48 937.0,211.46 938.0,211.44 939.0,211.42 940.0,211.40 941.0,211.38 942.0,211.37 943.0,211.35 944.0,211.34 945.0,211.33 946.0,211.32 947.0,211.31 948.0,211.31 949.0,211.30 950.0,211.30 951.0,211.30 952.0,211.31 953.0,211.31 954.0,211.33 955.0,211.34 956.0,211.36 957.0,211.39 958.0,211.41 959.0,211.44 960.0,211.48 961.0,211.51 962.0,211.55 963.0,211.59 964.0,211.63 965.0,211.67 966.0,211.71 967.0,211.76 968.0,211.81 969.0,211.85 970.0,211.90 971.0,211.95 972.0,212.02 973.0,212.11 974.0,212.20 975.0,212.30 976.0,212.41 977.0,212.52 978.0,212.64 979.0,212.76 980.0,212.88 981.0,213.00 982.0,213.12 983.0,213.24 984.0,213.35 985.0,213.45 986.0,213.55 987.0,213.63 988.0,213.71 989.0,213.78 990.0,213.84 991.0,213.91 992.0,213.98 993.0,214.05 994.0,214.12 995.0,214.19 996.0,214.26 997.0,214.32 998.0,214.39 999.0,214.45 1000.0,214.51 1001.0,214.57 1002.0,214.62 1003.0,214.67 1004.0,214.71 1005.0,214.76 1006.0,214.79 1007.0,214.82 1008.0,214.85 1009.0,214.87 1010.0,214.89 1011.0,214.90 1012.0,214.90 1013.0,214.90 1014.0,214.89 1015.0,214.89 1016.0,214.88 1017.0,214.87 1018.0,214.85 1019.0,214.84 1020.0,214.82 1021.0,214.80 1022.0,214.77 1023.0,214.75 1024.0,214.72 1025.0,214.70 1026.0,214.67 1027.0,214.63 1028.0,214.60 1029.0,214.57 1030.0,214.53 1031.0,214.49 1032.0,214.46 1033.0,214.42 1034.0,214.38 1035.0,214.33 1036.0,214.29 1037.0,214.24 1038.0,214.17 1039.0,214.08 1040.0,213.99 1041.0,213.88 1042.0,213.76 1043.0,213.64 1044.0,213.50 1045.0,213.37 1046.0,213.23 1047.0,213.09 1048.0,212.95 1049.0,212.80 1050.0,212.67 1051.0,212.53 1052.0,212.41 1053.0,212.29 1054.0,212.18 1055.0,212.06 1056.0,211.94 1057.0,211.81 1058.0,211.67 1059.0,211.54 1060.0,211.41 1061.0,211.30 1062.0,211.20 1063.0,211.11 1064.0,211.05 1065.0,211.01 1066.0,211.00 1067.0,211.02 1068.0,211.06 1069.0,211.12 1070.0,211.19 1071.0,211.29 1072.0,211.41 1073.0,211.54 1074.0,211.68 1075.0,211.84 1076.0,212.02 1077.0,212.20 1078.0,212.39 1079.0,212.59 1080.0,212.80 1081.0,213.01 1082.0,213.24 1083.0,213.54 1084.0,213.89 1085.0,214.31 1086.0,214.77 1087.0,215.28 1088.0,215.82 1089.0,216.40 1090.0,217.01 1091.0,217.63 1092.0,218.26 1093.0,218.91 1094.0,219.57 1095.0,220.28 1096.0,221.06 1097.0,221.88 1098.0,222.75 1099.0,223.67 1100.0,224.62 1101.0,225.60 1102.0,226.61 1103.0,227.67 1104.0,228.78 1105.0,229.95 1106.0,231.17 1107.0,232.44 1108.0,233.74 1109.0,235.09 1110.0,236.46 1111.0,237.87 1112.0,239.32 1113.0,240.81 1114.0,242.37 1115.0,243.97 1116.0,245.62 1117.0,247.31 1118.0,249.03 1119.0,250.79 1120.0,252.57 1121.0,254.38 1122.0,256.20 1123.0,258.05 1124.0,259.92 1125.0,261.86 1126.0,263.86 1127.0,265.89 1128.0,267.94 1129.0,269.99 1130.0,272.04 1131.0,274.11 1132.0,276.21 1133.0,278.32 1134.0,280.45 1135.0,282.59 1136.0,284.72 1137.0,286.86 1138.0,288.99 1139.0,291.12 1140.0,293.22 1141.0,295.31 1142.0,297.37 1143.0,299.41 1144.0,301.41 1145.0,303.38 1146.0,305.32 1147.0,307.24 1148.0,309.15 1149.0,311.03 1150.0,312.91 1151.0,314.76 1152.0,316.61 1153.0,318.44 1154.0,320.27 1155.0,322.08 1156.0,323.89 1157.0,325.70 1158.0,327.50 1159.0,329.30 1160.0,331.11 1161.0,332.91 1162.0,334.72 1163.0,336.53 1164.0,338.35 1165.0,340.17 1166.0,342.01 1167.0,343.85 1168.0,345.71 1169.0,347.56 1170.0,349.42 1171.0,351.29 1172.0,353.15 1173.0,355.01 1174.0,356.88 1175.0,358.74 1176.0,360.60 1177.0,362.46 1178.0,364.31 1179.0,366.16 1180.0,368.01 1181.0,369.84 1182.0,371.68 1183.0,373.50 1184.0,375.33 1185.0,377.15 1186.0,378.96 1187.0,380.77 1188.0,382.57 1189.0,384.36 1190.0,386.14 1191.0,387.91 1192.0,389.67 1193.0,391.42 1194.0,393.17 1195.0,394.90 1196.0,396.63 1197.0,398.35 1198.0,400.07 1199.0,401.77 1200.0,403.47 1201.0,405.16 1202.0,406.85 1203.0,408.52 1204.0,410.19 1205.0,411.85 1206.0,413.50 1207.0,415.15 1208.0,416.79 1209.0,418.42 1210.0,420.05 1211.0,421.67 1212.0,423.28 1213.0,424.88 1214.0,426.48 1215.0,428.07 1216.0,429.66 1217.0,431.23 1218.0,432.81 1219.0,434.37 1220.0,435.93 1221.0,437.48 1222.0,439.03 1223.0,440.57 1224.0,442.10 1225.0,443.63 1226.0,445.15 1227.0,446.66 1228.0,448.17 1229.0,449.67 1230.0,451.17 1231.0,452.66 1232.0,454.15 1233.0,455.62 1234.0,457.10 1235.0,458.57 1236.0,460.03 1237.0,461.48 1238.0,462.93 1239.0,464.38 1240.0,465.82 1241.0,467.25 1242.0,468.68 1243.0,470.11 1244.0,471.52 1245.0,472.94 1246.0,474.34 1247.0,475.75 1248.0,477.14 1249.0,478.54 1250.0,479.92 1251.0,481.30 1252.0,482.68 1253.0,484.05 1254.0,485.42 1255.0,486.78 1256.0,488.14 1257.0,489.49 1258.0,490.84 1259.0,492.18 1260.0,493.52 1261.0,494.85 1262.0,496.18 1263.0,497.50 1264.0,498.82 1265.0,500.14 1266.0,501.45 1267.0,502.75 1268.0,504.05 1269.0,505.35 1270.0,506.64 1271.0,507.93 1272.0,509.21 1273.0,510.49 1274.0,511.76 1275.0,513.03 1276.0,514.30 1277.0,515.56 1278.0,516.82 1279.0,518.07 1280.0,519.32 1281.0,520.57 1282.0,521.81 1283.0,523.05 1284.0,524.28 1285.0,525.51 1286.0,526.73 1287.0,527.95 1288.0,529.17 1289.0,530.38 1290.0,531.59 1291.0,532.80 1292.0,534.00 1293.0,535.20 1294.0,536.39 1295.0,537.58 1296.0,538.77 1297.0,539.95 1298.0,541.13 1299.0,542.30 1300.0,543.48 1301.0,544.64 1302.0,545.81 1303.0,546.97 1304.0,548.13 1305.0,549.28 1306.0,550.43 1307.0,551.58 1308.0,552.72 1309.0,553.86 1310.0,555.00 1311.0,556.13 1312.0,557.26 1313.0,558.39 1314.0,559.51 1315.0,560.63 1316.0,561.74 1317.0,562.86 1318.0,563.97 1319.0,565.07 1320.0,566.18 1321.0,567.28 1322.0,568.37 1323.0,569.47 1324.0,570.56 1325.0,571.65 1326.0,572.73 1327.0,573.81 1328.0,574.89 1329.0,575.96 1330.0,577.04 1331.0,578.10 1332.0,579.17 1333.0,580.23 1334.0,581.29 1335.0,582.35 1336.0,583.40 1337.0,584.46 1338.0,585.50 1339.0,586.55 1340.0,587.59 1341.0,588.63 1342.0,589.67 1343.0,590.70 1344.0,591.73 1345.0,592.76 1346.0,593.79 1347.0,594.81 1348.0,595.83 1349.0,596.85 1350.0,597.86 1351.0,598.87 1352.0,599.88 1353.0,600.89 1354.0,601.89 1355.0,602.89 1356.0,603.89 1357.0,604.89 1358.0,605.88 1359.0,606.87 1360.0,607.86 1361.0,608.84 1362.0,609.83 1363.0,610.81 1364.0,611.79 1365.0,612.76 1366.0,613.73 1367.0,614.70 1368.0,615.67 1369.0,616.64 1370.0,617.60 1371.0,618.56 1372.0,619.52 1373.0,620.47 1374.0,621.43 1375.0,622.38 1376.0,623.33 1377.0,624.27 1378.0,625.22 1379.0,626.16 1380.0,627.10 1381.0,628.03 1382.0,628.97 1383.0,629.90 1384.0,630.83 1385.0,631.76 1386.0,632.68 1387.0,633.61 1388.0,634.53 1389.0,635.45 1390.0,636.36 1391.0,637.28 1392.0,638.19 1393.0,639.10 1394.0,640.01 1395.0,640.91 1396.0,641.81 1397.0,642.72 1398.0,643.61 1399.0,644.51 1400.0,645.41 1401.0,646.30 1402.0,647.19 1403.0,648.08 1404.0,648.96 1405.0,649.85 1406.0,650.73 1407.0,651.61 1408.0,652.49 1409.0,653.37 1410.0,654.24 1411.0,655.11 1412.0,655.98 1413.0,656.85 1414.0,657.72 1415.0,658.58 1416.0,659.44 1417.0,660.30 1418.0,661.16 1419.0,662.02 1420.0,662.87 1421.0,663.73 1422.0,664.58 1423.0,665.43 1424.0,666.27 1425.0,667.12 1426.0,667.96 1427.0,668.80 1428.0,669.64 1429.0,670.48 1430.0,671.32 1431.0,672.15 1432.0,672.98 1433.0,673.81 1434.0,674.64 1435.0,675.47 1436.0,676.29 1437.0,677.11 1438.0,677.94 1439.0,678.76 1440.0,679.57 1441.0,680.39 1442.0,681.20 1443.0,682.02 1444.0,682.83 1445.0,683.64 1446.0,684.44 1447.0,685.25 1448.0,686.05 1449.0,686.86 1450.0,687.66 1451.0,688.46 1452.0,689.25 1453.0,690.05 1454.0,690.84 1455.0,691.64 1456.0,692.43 1457.0,693.22 1458.0,694.00 1459.0,694.79 1460.0,695.57 1461.0,696.36 1462.0,697.14 1463.0,697.92 1464.0,698.69 1465.0,699.47 1466.0,700.25 1467.0,701.02 1468.0,701.79 1469.0,702.56 1470.0,703.33 1471.0,704.10 1472.0,704.86 1473.0,705.62 1474.0,706.39 1475.0,707.15 1476.0,707.91 1477.0,708.66 1478.0,709.42 1479.0,710.18 1480.0,710.93 1481.0,711.68 1482.0,712.43 1483.0,713.18 1484.0,713.93 1485.0,714.67 1486.0,715.42 1487.0,716.16 1488.0,716.90 1489.0,717.64 1490.0,718.38 1491.0,719.12 1492.0,719.86 1493.0,720.59 1494.0,721.32 1495.0,722.05 1496.0,722.78 1497.0,723.51 1498.0,724.24 1499.0,724.97 1500.0,725.69 1501.0,726.42 1502.0,727.14 1503.0,727.86 1504.0,728.58 1505.0,729.30 1506.0,730.01 1507.0,730.73 1508.0,731.44 1509.0,732.15 1510.0,732.87 1511.0,733.58 1512.0,734.28 1513.0,734.99 1514.0,735.70 1515.0,736.40 1516.0,737.11 1517.0,737.81 1518.0,738.51 1519.0,739.21 1520.0,739.91 1521.0,740.60 1522.0,741.30 1523.0,742.00 1524.0,742.69 1525.0,743.38 1526.0,744.07 1527.0,744.76 1528.0,745.45 1529.0,746.14 1530.0,746.82 1531.0,747.51 1532.0,748.19 1533.0,748.87 1534.0,749.55 1535.0,750.23 1536.0,750.91 1537.0,751.59 1538.0,752.27 1539.0,752.94 1540.0,753.62 1541.0,754.29 1542.0,754.96 1543.0,755.63 1544.0,756.30 1545.0,756.97 1546.0,757.63 1547.0,758.30 1548.0,758.97 1549.0,759.63 1550.0,760.29 1551.0,760.95 1552.0,761.61 1553.0,762.27 1554.0,762.93 1555.0,763.59 1556.0,764.24 1557.0,764.90 1558.0,765.55 1559.0,766.20 1560.0,766.85 1561.0,767.50 1562.0,768.15 1563.0,768.80 1564.0,769.45 1565.0,770.09 1566.0,770.74 1567.0,771.38 1568.0,772.02 1569.0,772.66 1570.0,773.30 1571.0,773.94 1572.0,774.58 1573.0,775.22 1574.0,775.85 1575.0,776.49 1576.0,777.12 1577.0,777.76 1578.0,778.39 1579.0,779.02 1580.0,779.65 1581.0,780.28 1582.0,780.91 1583.0,781.53 1584.0,782.16 1585.0,782.78 1586.0,783.41 1587.0,784.03 1588.0,784.65 1589.0,785.27 1590.0,785.89 1591.0,786.51 1592.0,787.13 1593.0,787.75 1594.0,788.36 1595.0,788.98 1596.0,789.59 1597.0,790.20 1598.0,790.82 1599.0,791.43 1600.0,792.04 1601.0,792.65 1602.0,793.25 1603.0,793.86 1604.0,794.47 1605.0,795.07 1606.0,795.68 1607.0,796.28 1608.0,796.88 1609.0,797.48 1610.0,798.08 1611.0,798.68 1612.0,799.28 1613.0,799.88 1614.0,800.48 1615.0,801.07 1616.0,801.67 1617.0,802.26 1618.0,802.85 1619.0,803.45 1620.0,804.04 1621.0,804.63 1622.0,805.22 1623.0,805.81 1624.0,806.40 1625.0,806.98 1626.0,807.57 1627.0,808.15 1628.0,808.74 1629.0,809.32 1630.0,809.90 1631.0,810.48 1632.0,811.07 1633.0,811.65 1634.0,812.22 1635.0,812.80 1636.0,813.38 1637.0,813.96 1638.0,814.53 1639.0,815.11 1640.0,815.68 1641.0,816.25 1642.0,816.83 1643.0,817.40 1644.0,817.97 1645.0,818.54 1646.0,819.11 1647.0,819.67 1648.0,820.24 1649.0,820.81 1650.0,821.37 1651.0,821.94 1652.0,822.50 1653.0,823.07 1654.0,823.63 1655.0,824.19 1656.0,824.75 1657.0,825.31 1658.0,825.87 1659.0,826.43 1660.0,826.98 1661.0,827.54 1662.0,828.10 1663.0,828.65 1664.0,829.21 1665.0,829.76 1666.0,830.31 1667.0,830.86 1668.0,831.42 1669.0,831.97 1670.0,832.52 1671.0,833.06 1672.0,833.61 1673.0,834.16 1674.0,834.71 1675.0,835.25 1676.0,835.80 1677.0,836.34 1678.0,836.88 1679.0,837.43 1680.0,837.97 1681.0,838.51 1682.0,839.05 1683.0,839.59 1684.0,840.13 1685.0,840.67 1686.0,841.20 1687.0,841.74 1688.0,842.28 1689.0,842.81 1690.0,843.35 1691.0,843.88 1692.0,844.41 1693.0,844.95 1694.0,845.48 1695.0,846.01 1696.0,846.54 1697.0,847.07 1698.0,847.60 1699.0,848.13 1700.0,848.65 1701.0,849.18 1702.0,849.71 1703.0,850.23 1704.0,850.75 1705.0,851.28 1706.0,851.80 1707.0,852.32 1708.0,852.85 1709.0,853.37 1710.0,853.89 1711.0,854.41 1712.0,854.93 1713.0,855.44 1714.0,855.96 1715.0,856.48 1716.0,856.99 1717.0,857.51 1718.0,858.02 1719.0,858.54 1720.0,859.05 1721.0,859.57 1722.0,860.08 1723.0,860.59 1724.0,861.10 1725.0,861.61 1726.0,862.12 1727.0,862.63 1728.0,863.14 1729.0,863.64 1730.0,864.15 1731.0,864.66 1732.0,865.16 1733.0,865.67 1734.0,866.17 1735.0,866.67 1736.0,867.18 1737.0,867.68 1738.0,868.18 1739.0,868.68 1740.0,869.18 1741.0,869.68 1742.0,870.18 1743.0,870.68 1744.0,871.18 1745.0,871.68 1746.0,872.17 1747.0,872.67 1748.0,873.16 1749.0,873.66 1750.0,874.15 1751.0,874.65 1752.0,875.14 1753.0,875.63 1754.0,876.12 1755.0,876.61 1756.0,877.10 1757.0,877.59 1758.0,878.08 1759.0,878.57 1760.0,879.06 1761.0,879.55 1762.0,880.03 1763.0,880.52 1764.0,881.00 1765.0,881.49 1766.0,881.97 1767.0,882.46 1768.0,882.94 1769.0,883.42 1770.0,883.90 1771.0,884.39 1772.0,884.87 1773.0,885.35 1774.0,885.83 1775.0,886.31 1776.0,886.78 1777.0,887.26 1778.0,887.74 1779.0,888.22 1780.0,888.69 1781.0,889.17 1782.0,889.64 1783.0,890.12 1784.0,890.59 1785.0,891.06 1786.0,891.54 1787.0,892.01 1788.0,892.48 1789.0,892.95 1790.0,893.42 1791.0,893.89 1792.0,894.36 1793.0,894.83 1794.0,895.30 1795.0,895.77 1796.0,896.23 1797.0,896.70 1798.0,897.17 1799.0,897.63 1800.0,898.10 1801.0,898.56 1802.0,899.02 1803.0,899.49 1804.0,899.95 1805.0,900.41 1806.0,900.87 1807.0,901.33 1808.0,901.80 1809.0,902.26 1810.0,902.71 1811.0,903.17 1812.0,903.63 1813.0,904.09 1814.0,904.55 1815.0,905.00 1816.0,905.46 1817.0,905.92 1818.0,906.37 1819.0,906.83 1820.0,907.28 1821.0,907.73 1822.0,908.19 1823.0,908.64 1824.0,909.09 1825.0,909.54 1826.0,910.00 1827.0,910.45 1828.0,910.90 1829.0,911.35 1830.0,911.79 1831.0,912.24 1832.0,912.69 1833.0,913.14 1834.0,913.59 1835.0,914.03 1836.0,914.48 1837.0,914.92 1838.0,915.37 1839.0,915.81 1840.0,916.26 1841.0,916.70 1842.0,917.14 1843.0,917.59 1844.0,918.03 1845.0,918.47 1846.0,918.91 1847.0,919.35 1848.0,919.79 1849.0,920.23 1850.0,920.67 1851.0,921.11 1852.0,921.55 1853.0,921.98 1854.0,922.42" fill="none" stroke="#000" stroke-width="2" stroke-linejoin="round"/>
<polyline points="45.0,124.00 46.0,124.00 47.0,124.00 48.0,124.00 49.0,124.00 50.0,124.00 51.0,124.00 52.0,124.00 53.0,124.00 54.0,124.00 55.0,124.01 56.0,124.01 57.0,124.01 58.0,124.01 59.0,124.01 60.0,124.01 61.0,124.01 62.0,124.01 63.0,124.01 64.0,124.01 65.0,124.01 66.0,124.01 67.0,124.02 68.0,124.02 69.0,124.02 70.0,124.02 71.0,124.02 72.0,124.02 73.0,124.02 74.0,124.02 75.0,124.02 76.0,124.02 77.0,124.03 78.0,124.03 79.0,124.03 80.0,124.03 81.0,124.03 82.0,124.03 83.0,124.03 84.0,124.03 85.0,124.04 86.0,124.04 87.0,124.04 88.0,124.04 89.0,124.04 90.0,124.04 91.0,124.04 92.0,124.05 93.0,124.05 94.0,124.05 95.0,124.05 96.0,124.05 97.0,124.05 98.0,124.05 99.0,124.06 100.0,124.06 101.0,124.06 102.0,124.06 103.0,124.06 104.0,124.06 105.0,124.07 106.0,124.07 107.0,124.07 108.0,124.07 109.0,124.07 110.0,124.07 111.0,124.08 112.0,124.08 113.0,124.08 114.0,124.08 115.0,124.08 116.0,124.08 117.0,124.09 118.0,124.09 119.0,124.09 120.0,124.09 121.0,124.09 122.0,124.10 123.0,124.10 124.0,124.10 125.0,124.10 126.0,124.10 127.0,124.10 128.0,124.11 129.0,124.11 130.0,124.11 131.0,124.11 132.0,124.11 133.0,124.12 134.0,124.12 135.0,124.12 136.0,124.12 137.0,124.12 138.0,124.13 139.0,124.13 140.0,124.13 141.0,124.13 142.0,124.13 143.0,124.14 144.0,124.14 145.0,124.14 146.0,124.14 147.0,124.14 148.0,124.15 149.0,124.15 150.0,124.15 151.0,124.15 152.0,124.15 153.0,124.16 154.0,124.16 155.0,124.16 156.0,124.16 157.0,124.16 158.0,124.17 159.0,124.17 160.0,124.17 161.0,124.17 162.0,124.18 163.0,124.18 164.0,124.18 165.0,124.18 166.0,124.19 167.0,124.19 168.0,124.19 169.0,124.19 170.0,124.20 171.0,124.20 172.0,124.20 173.0,124.20 174.0,124.21 175.0,124.21 176.0,124.21 177.0,124.22 178.0,124.22 179.0,124.22 180.0,124.22 181.0,124.23 182.0,124.23 183.0,124.23 184.0,124.24 185.0,124.24 186.0,124.24 187.0,124.25 188.0,124.25 189.0,124.25 190.0,124.26 191.0,124.26 192.0,124.26 193.0,124.27 194.0,124.27 195.0,124.27 196.0,124.28 197.0,124.28 198.0,124.28 199.0,124.29 200.0,124.29 201.0,124.29 202.0,124.30 203.0,124.30 204.0,124.30 205.0,124.31 206.0,124.31 207.0,124.31 208.0,124.32 209.0,124.32 210.0,124.32 211.0,124.33 212.0,124.33 213.0,124.34 214.0,124.34 215.0,124.34 216.0,124.35 217.0,124.35 218.0,124.36 219.0,124.36 220.0,124.36 221.0,124.37 222.0,124.37 223.0,124.38 224.0,124.38 225.0,124.38 226.0,124.39 227.0,124.39 228.0,124.40 229.0,124.40 230.0,124.40 231.0,124.41 232.0,124.41 233.0,124.42 234.0,124.42 235.0,124.42 236.0,124.43 237.0,124.43 238.0,124.44 239.0,124.44 240.0,124.45 241.0,124.45 242.0,124.46 243.0,124.46 244.0,124.46 245.0,124.47 246.0,124.47 247.0,124.48 248.0,124.48 249.0,124.49 250.0,124.49 251.0,124.50 252.0,124.50 253.0,124.50 254.0,124.51 255.0,124.51 256.0,124.52 257.0,124.52 258.0,124.53 259.0,124.53 260.0,124.54 261.0,124.54 262.0,124.55 263.0,124.55 264.0,124.56 265.0,124.56 266.0,124.57 267.0,124.57 268.0,124.58 269.0,124.58 270.0,124.59 271.0,124.59 272.0,124.60 273.0,124.61 274.0,124.61 275.0,124.62 276.0,124.62 277.0,124.63 278.0,124.63 279.0,124.64 280.0,124.64 281.0,124.65 282.0,124.66 283.0,124.66 284.0,124.67 285.0,124.67 286.0,124.68 287.0,124.69 288.0,124.69 289.0,124.70 290.0,124.70 291.0,124.71 292.0,124.72 293.0,124.72 294.0,124.73 295.0,124.73 296.0,124.74 297.0,124.75 298.0,124.75 299.0,124.76 300.0,124.77 301.0,124.77 302.0,124.78 303.0,124.79 304.0,124.79 305.0,124.80 306.0,124.81 307.0,124.81 308.0,124.82 309.0,124.83 310.0,124.83 311.0,124.84 312.0,124.85 313.0,124.85 314.0,124.86 315.0,124.87 316.0,124.88 317.0,124.88 318.0,124.89 319.0,124.90 320.0,124.90 321.0,124.91 322.0,124.92 323.0,124.93 324.0,124.93 325.0,124.94 326.0,124.95 327.0,124.96 328.0,124.96 329.0,124.97 330.0,124.98 331.0,124.99 332.0,124.99 333.0,125.00 334.0,125.01 335.0,125.02 336.0,125.02 337.0,125.03 338.0,125.04 339.0,125.05 340.0,125.06 341.0,125.06 342.0,125.07 343.0,125.08 344.0,125.09 345.0,125.10 346.0,125.10 347.0,125.11 348.0,125.12 349.0,125.13 350.0,125.14 351.0,125.15 352.0,125.15 353.0,125.16 354.0,125.17 355.0,125.18 356.0,125.19 357.0,125.20 358.0,125.21 359.0,125.21 360.0,125.22 361.0,125.23 362.0,125.24 363.0,125.25 364.0,125.26 365.0,125.27 366.0,125.28 367.0,125.29 368.0,125.29 369.0,125.30 370.0,125.31 371.0,125.32 372.0,125.33 373.0,125.34 374.0,125.35 375.0,125.36 376.0,125.37 377.0,125.38 378.0,125.39 379.0,125.40 380.0,125.40 381.0,125.41 382.0,125.42 383.0,125.43 384.0,125.44 385.0,125.45 386.0,125.46 387.0,125.47 388.0,125.48 389.0,125.49 390.0,125.50 391.0,125.51 392.0,125.52 393.0,125.53 394.0,125.54 395.0,125.55 396.0,125.56 397.0,125.57 398.0,125.58 399.0,125.59 400.0,125.60 401.0,125.61 402.0,125.62 403.0,125.64 404.0,125.65 405.0,125.66 406.0,125.67 407.0,125.68 408.0,125.69 409.0,125.71 410.0,125.72 411.0,125.73 412.0,125.74 413.0,125.75 414.0,125.77 415.0,125.78 416.0,125.79 417.0,125.80 418.0,125.82 419.0,125.83 420.0,125.84 421.0,125.85 422.0,125.87 423.0,125.88 424.0,125.89 425.0,125.91 426.0,125.92 427.0,125.93 428.0,125.95 429.0,125.96 430.0,125.98 431.0,125.99 432.0,126.00 433.0,126.02 434.0,126.03 435.0,126.05 436.0,126.06 437.0,126.08 438.0,126.09 439.0,126.10 440.0,126.12 441.0,126.13 442.0,126.15 443.0,126.16 444.0,126.18 445.0,126.19 446.0,126.21 447.0,126.23 448.0,126.24 449.0,126.26 450.0,126.27 451.0,126.29 452.0,126.30 453.0,126.32 454.0,126.34 455.0,126.35 456.0,126.37 457.0,126.38 458.0,126.40 459.0,126.42 460.0,126.43 461.0,126.45 462.0,126.47 463.0,126.48 464.0,126.50 465.0,126.52 466.0,126.53 467.0,126.55 468.0,126.57 469.0,126.59 470.0,126.60 471.0,126.62 472.0,126.64 473.0,126.66 474.0,126.68 475.0,126.70 476.0,126.72 477.0,126.74 478.0,126.76 479.0,126.78 480.0,126.80 481.0,126.82 482.0,126.84 483.0,126.86 484.0,126.88 485.0,126.90 486.0,126.92 487.0,126.94 488.0,126.96 489.0,126.98 490.0,127.01 491.0,127.03 492.0,127.05 493.0,127.07 494.0,127.10 495.0,127.12 496.0,127.14 497.0,127.16 498.0,127.19 499.0,127.21 500.0,127.23 501.0,127.26 502.0,127.28 503.0,127.30 504.0,127.33 505.0,127.35 506.0,127.38 507.0,127.40 508.0,127.43 509.0,127.45 510.0,127.48 511.0,127.50 512.0,127.52 513.0,127.55 514.0,127.58 515.0,127.60 516.0,127.63 517.0,127.65 518.0,127.68 519.0,127.70 520.0,127.73 521.0,127.76 522.0,127.78 523.0,127.81 524.0,127.84 525.0,127.87 526.0,127.89 527.0,127.92 528.0,127.95 529.0,127.98 530.0,128.01 531.0,128.04 532.0,128.07 533.0,128.10 534.0,128.13 535.0,128.16 536.0,128.19 537.0,128.23 538.0,128.26 539.0,128.29 540.0,128.33 541.0,128.36 542.0,128.39 543.0,128.43 544.0,128.46 545.0,128.50 546.0,128.54 547.0,128.58 548.0,128.62 549.0,128.66 550.0,128.71 551.0,128.75 552.0,128.80 553.0,128.85 554.0,128.90 555.0,128.95 556.0,129.00 557.0,129.05 558.0,129.10 559.0,129.15 560.0,129.20 561.0,129.24 562.0,129.29 563.0,129.34 564.0,129.38 565.0,129.42 566.0,129.46 567.0,129.50 568.0,129.54 569.0,129.57 570.0,129.60 571.0,129.64 572.0,129.67 573.0,129.70 574.0,129.72 575.0,129.75 576.0,129.78 577.0,129.81 578.0,129.83 579.0,129.86 580.0,129.88 581.0,129.91 582.0,129.93 583.0,129.96 584.0,129.98 585.0,130.01 586.0,130.04 587.0,130.06 588.0,130.09 589.0,130.12 590.0,130.15 591.0,130.18 592.0,130.21 593.0,130.24 594.0,130.27 595.0,130.30 596.0,130.34 597.0,130.38 598.0,130.42 599.0,130.46 600.0,130.50 601.0,130.55 602.0,130.60 603.0,130.65 604.0,130.71 605.0,130.78 606.0,130.84 607.0,130.91 608.0,130.98 609.0,131.06 610.0,131.13 611.0,131.20 612.0,131.28 613.0,131.35 614.0,131.43 615.0,131.50 616.0,131.57 617.0,131.64 618.0,131.71 619.0,131.79 620.0,131.86 621.0,131.93 622.0,132.01 623.0,132.08 624.0,132.16 625.0,132.24 626.0,132.33 627.0,132.41 628.0,132.50 629.0,132.59 630.0,132.68 631.0,132.78 632.0,132.88 633.0,132.98 634.0,133.09 635.0,133.20 636.0,133.31 637.0,133.42 638.0,133.55 639.0,133.67 640.0,133.80 641.0,133.94 642.0,134.08 643.0,134.23 644.0,134.38 645.0,134.54 646.0,134.71 647.0,134.88 648.0,135.05 649.0,135.23 650.0,135.42 651.0,135.60 652.0,135.79 653.0,135.98 654.0,136.18 655.0,136.37 656.0,136.57 657.0,136.77 658.0,136.97 659.0,137.17 660.0,137.36 661.0,137.56 662.0,137.76 663.0,137.96 664.0,138.15 665.0,138.34 666.0,138.54 667.0,138.73 668.0,138.93 669.0,139.12 670.0,139.32 671.0,139.51 672.0,139.71 673.0,139.92 674.0,140.13 675.0,140.34 676.0,140.55 677.0,140.77 678.0,141.00 679.0,141.23 680.0,141.47 681.0,141.71 682.0,141.96 683.0,142.22 684.0,142.49 685.0,142.77 686.0,143.06 687.0,143.36 688.0,143.67 689.0,143.99 690.0,144.32 691.0,144.67 692.0,145.02 693.0,145.38 694.0,145.75 695.0,146.13 696.0,146.52 697.0,146.92 698.0,147.32 699.0,147.73 700.0,148.15 701.0,148.57 702.0,149.00 703.0,149.44 704.0,149.88 705.0,150.33 706.0,150.78 707.0,151.24 708.0,151.70 709.0,152.18 710.0,152.67 711.0,153.17 712.0,153.68 713.0,154.21 714.0,154.75 715.0,155.30 716.0,155.87 717.0,156.46 718.0,157.06 719.0,157.68 720.0,158.31 721.0,158.97 722.0,159.64 723.0,160.34 724.0,161.06 725.0,161.82 726.0,162.59 727.0,163.40 728.0,164.22 729.0,165.07 730.0,165.94 731.0,166.84 732.0,167.75 733.0,168.68 734.0,169.64 735.0,170.61 736.0,171.60 737.0,172.61 738.0,173.67 739.0,174.78 740.0,175.92 741.0,177.09 742.0,178.30 743.0,179.54 744.0,180.80 745.0,182.07 746.0,183.37 747.0,184.68 748.0,185.99 749.0,187.33 750.0,188.70 751.0,190.10 752.0,191.54 753.0,193.00 754.0,194.51 755.0,196.05 756.0,197.64 757.0,199.29 758.0,201.00 759.0,202.76 760.0,204.57 761.0,206.40 762.0,208.25 763.0,210.11 764.0,211.98 765.0,213.84 766.0,215.68 767.0,217.56 768.0,219.50 769.0,221.48 770.0,223.46 771.0,225.44 772.0,227.37 773.0,229.24 774.0,231.03 775.0,232.71 776.0,234.29 777.0,235.91 778.0,237.54 779.0,239.11 780.0,240.53 781.0,241.74 782.0,242.67 783.0,243.24 784.0,243.70 785.0,244.11 786.0,244.46 787.0,244.71 788.0,244.87 789.0,244.89 790.0,244.74 791.0,244.43 792.0,244.00 793.0,243.48 794.0,242.91 795.0,242.31 796.0,241.50 797.0,240.44 798.0,239.18 799.0,237.73 800.0,236.15 801.0,234.46 802.0,232.69 803.0,230.89 804.0,229.09 805.0,227.32 806.0,225.62 807.0,224.02 808.0,222.56 809.0,221.15 810.0,219.74 811.0,218.32 812.0,216.91 813.0,215.51 814.0,214.14 815.0,212.80 816.0,211.51 817.0,210.26 818.0,209.07 819.0,207.95 820.0,206.90 821.0,205.89 822.0,204.92 823.0,203.98 824.0,203.07 825.0,202.19 826.0,201.34 827.0,200.52 828.0,199.73 829.0,198.97 830.0,198.24 831.0,197.54 832.0,196.87 833.0,196.20 834.0,195.53 835.0,194.86 836.0,194.21 837.0,193.58 838.0,192.98 839.0,192.42 840.0,191.89 841.0,191.41 842.0,190.99 843.0,190.64 844.0,190.35 845.0,190.08 846.0,189.83 847.0,189.58 848.0,189.33 849.0,189.10 850.0,188.87 851.0,188.66 852.0,188.45 853.0,188.27 854.0,188.09 855.0,187.94 856.0,187.80 857.0,187.68 858.0,187.58 859.0,187.50 860.0,187.44 861.0,187.41 862.0,187.40 863.0,187.42 864.0,187.46 865.0,187.53 866.0,187.62 867.0,187.74 868.0,187.87 869.0,188.02 870.0,188.19 871.0,188.38 872.0,188.58 873.0,188.80 874.0,189.02 875.0,189.26 876.0,189.51 877.0,189.77 878.0,190.04 879.0,190.31 880.0,190.59 881.0,190.87 882.0,191.15 883.0,191.44 884.0,191.72 885.0,192.00 886.0,192.29 887.0,192.59 888.0,192.93 889.0,193.30 890.0,193.70 891.0,194.11 892.0,194.55 893.0,195.00 894.0,195.47 895.0,195.94 896.0,196.42 897.0,196.91 898.0,197.39 899.0,197.88 900.0,198.35 901.0,198.82 902.0,199.27 903.0,199.71 904.0,200.12 905.0,200.54 906.0,200.97 907.0,201.41 908.0,201.84 909.0,202.28 910.0,202.72 911.0,203.15 912.0,203.58 913.0,204.01 914.0,204.42 915.0,204.82 916.0,205.22 917.0,205.59 918.0,205.95 919.0,206.29 920.0,206.61 921.0,206.91 922.0,207.18 923.0,207.45 924.0,207.71 925.0,207.97 926.0,208.23 927.0,208.49 928.0,208.73 929.0,208.97 930.0,209.20 931.0,209.42 932.0,209.63 933.0,209.83 934.0,210.01 935.0,210.17 936.0,210.32 937.0,210.45 938.0,210.57 939.0,210.66 940.0,210.73 941.0,210.79 942.0,210.85 943.0,210.91 944.0,210.97 945.0,211.02 946.0,211.07 947.0,211.11 948.0,211.14 949.0,211.17 950.0,211.19 951.0,211.20 952.0,211.20 953.0,211.15 954.0,211.07 955.0,210.94 956.0,210.77 957.0,210.57 958.0,210.33 959.0,210.07 960.0,209.77 961.0,209.45 962.0,209.11 963.0,208.75 964.0,208.37 965.0,207.97 966.0,207.57 967.0,207.15 968.0,206.73 969.0,206.31 970.0,205.88 971.0,205.46 972.0,205.04 973.0,204.63 974.0,204.23 975.0,203.84 976.0,203.46 977.0,203.09 978.0,202.70 979.0,202.30 980.0,201.88 981.0,201.46 982.0,201.03 983.0,200.60 984.0,200.15 985.0,199.71 986.0,199.26 987.0,198.81 988.0,198.36 989.0,197.92 990.0,197.47 991.0,197.03 992.0,196.60 993.0,196.18 994.0,195.76 995.0,195.33 996.0,194.89 997.0,194.43 998.0,193.98 999.0,193.52 1000.0,193.07 1001.0,192.64 1002.0,192.24 1003.0,191.86 1004.0,191.52 1005.0,191.22 1006.0,190.98 1007.0,190.75 1008.0,190.53 1009.0,190.31 1010.0,190.10 1011.0,189.88 1012.0,189.68 1013.0,189.48 1014.0,189.29 1015.0,189.11 1016.0,188.94 1017.0,188.78 1018.0,188.63 1019.0,188.49 1020.0,188.37 1021.0,188.27 1022.0,188.18 1023.0,188.10 1024.0,188.05 1025.0,188.02 1026.0,188.00 1027.0,188.01 1028.0,188.06 1029.0,188.14 1030.0,188.24 1031.0,188.38 1032.0,188.54 1033.0,188.73 1034.0,188.93 1035.0,189.16 1036.0,189.40 1037.0,189.65 1038.0,189.92 1039.0,190.20 1040.0,190.48 1041.0,190.77 1042.0,191.06 1043.0,191.39 1044.0,191.78 1045.0,192.22 1046.0,192.70 1047.0,193.23 1048.0,193.79 1049.0,194.39 1050.0,195.02 1051.0,195.67 1052.0,196.35 1053.0,197.04 1054.0,197.74 1055.0,198.49 1056.0,199.30 1057.0,200.16 1058.0,201.08 1059.0,202.04 1060.0,203.04 1061.0,204.08 1062.0,205.16 1063.0,206.27 1064.0,207.40 1065.0,208.56 1066.0,209.74 1067.0,211.00 1068.0,212.36 1069.0,213.79 1070.0,215.26 1071.0,216.73 1072.0,218.19 1073.0,219.65 1074.0,221.14 1075.0,222.63 1076.0,224.15 1077.0,225.67 1078.0,227.20 1079.0,228.73 1080.0,230.26 1081.0,231.80 1082.0,233.32 1083.0,234.84 1084.0,236.36 1085.0,238.04 1086.0,239.81 1087.0,241.54 1088.0,243.08 1089.0,244.31 1090.0,245.10 1091.0,245.74 1092.0,246.33 1093.0,246.86 1094.0,247.29 1095.0,247.63 1096.0,247.84 1097.0,247.90 1098.0,247.79 1099.0,247.52 1100.0,247.11 1101.0,246.61 1102.0,246.04 1103.0,245.44 1104.0,244.63 1105.0,243.52 1106.0,242.16 1107.0,240.58 1108.0,238.82 1109.0,236.94 1110.0,234.95 1111.0,232.92 1112.0,230.88 1113.0,228.87 1114.0,226.91 1115.0,224.85 1116.0,222.63 1117.0,220.31 1118.0,217.92 1119.0,215.51 1120.0,213.12 1121.0,210.79 1122.0,208.57 1123.0,206.49 1124.0,204.56 1125.0,202.71 1126.0,200.92 1127.0,199.18 1128.0,197.49 1129.0,195.85 1130.0,194.25 1131.0,192.68 1132.0,191.14 1133.0,189.67 1134.0,188.26 1135.0,186.89 1136.0,185.54 1137.0,184.18 1138.0,182.79 1139.0,181.35 1140.0,179.78 1141.0,178.12 1142.0,176.53 1143.0,175.15 1144.0,174.05 1145.0,173.08 1146.0,172.20 1147.0,171.39 1148.0,170.62 1149.0,169.88 1150.0,169.14 1151.0,168.38 1152.0,167.57 1153.0,166.70 1154.0,165.79 1155.0,164.85 1156.0,163.91 1157.0,162.97 1158.0,162.06 1159.0,161.19 1160.0,160.39 1161.0,159.67 1162.0,159.01 1163.0,158.38 1164.0,157.77 1165.0,157.19 1166.0,156.63 1167.0,156.09 1168.0,155.57 1169.0,155.07 1170.0,154.59 1171.0,154.12 1172.0,153.66 1173.0,153.21 1174.0,152.77 1175.0,152.35 1176.0,151.94 1177.0,151.54 1178.0,151.17 1179.0,150.80 1180.0,150.44 1181.0,150.09 1182.0,149.74 1183.0,149.40 1184.0,149.06 1185.0,148.71 1186.0,148.36 1187.0,148.00 1188.0,147.64 1189.0,147.27 1190.0,146.91 1191.0,146.54 1192.0,146.18 1193.0,145.82 1194.0,145.47 1195.0,145.12 1196.0,144.79 1197.0,144.47 1198.0,144.16 1199.0,143.88 1200.0,143.60 1201.0,143.35 1202.0,143.12 1203.0,142.89 1204.0,142.69 1205.0,142.48 1206.0,142.29 1207.0,142.10 1208.0,141.91 1209.0,141.71 1210.0,141.51 1211.0,141.31 1212.0,141.09 1213.0,140.86 1214.0,140.63 1215.0,140.39 1216.0,140.15 1217.0,139.90 1218.0,139.65 1219.0,139.41 1220.0,139.16 1221.0,138.93 1222.0,138.69 1223.0,138.47 1224.0,138.25 1225.0,138.05 1226.0,137.85 1227.0,137.67 1228.0,137.50 1229.0,137.32 1230.0,137.15 1231.0,136.98 1232.0,136.82 1233.0,136.66 1234.0,136.50 1235.0,136.35 1236.0,136.21 1237.0,136.08 1238.0,135.95 1239.0,135.83 1240.0,135.71 1241.0,135.61 1242.0,135.51 1243.0,135.42 1244.0,135.34 1245.0,135.26 1246.0,135.19 1247.0,135.11 1248.0,135.04 1249.0,134.98 1250.0,134.91 1251.0,134.84 1252.0,134.78 1253.0,134.71 1254.0,134.64 1255.0,134.57 1256.0,134.50 1257.0,134.42 1258.0,134.35 1259.0,134.27 1260.0,134.20 1261.0,134.12 1262.0,134.05 1263.0,133.97 1264.0,133.89 1265.0,133.81 1266.0,133.74 1267.0,133.66 1268.0,133.58 1269.0,133.50 1270.0,133.42 1271.0,133.34 1272.0,133.25 1273.0,133.17 1274.0,133.08 1275.0,133.00 1276.0,132.91 1277.0,132.83 1278.0,132.74 1279.0,132.66 1280.0,132.58 1281.0,132.50 1282.0,132.42 1283.0,132.35 1284.0,132.27 1285.0,132.20 1286.0,132.13 1287.0,132.05 1288.0,131.98 1289.0,131.91 1290.0,131.84 1291.0,131.77 1292.0,131.70 1293.0,131.63 1294.0,131.57 1295.0,131.50 1296.0,131.43 1297.0,131.37 1298.0,131.30 1299.0,131.23 1300.0,131.16 1301.0,131.10 1302.0,131.03 1303.0,130.96 1304.0,130.90 1305.0,130.84 1306.0,130.77 1307.0,130.72 1308.0,130.66 1309.0,130.60 1310.0,130.55 1311.0,130.50 1312.0,130.45 1313.0,130.41 1314.0,130.36 1315.0,130.32 1316.0,130.27 1317.0,130.23 1318.0,130.19 1319.0,130.15 1320.0,130.11 1321.0,130.07 1322.0,130.03 1323.0,129.99 1324.0,129.96 1325.0,129.92 1326.0,129.88 1327.0,129.85 1328.0,129.81 1329.0,129.78 1330.0,129.74 1331.0,129.71 1332.0,129.67 1333.0,129.64 1334.0,129.60 1335.0,129.57 1336.0,129.54 1337.0,129.50 1338.0,129.46 1339.0,129.43 1340.0,129.40 1341.0,129.36 1342.0,129.33 1343.0,129.29 1344.0,129.26 1345.0,129.22 1346.0,129.19 1347.0,129.16 1348.0,129.12 1349.0,129.09 1350.0,129.06 1351.0,129.02 1352.0,128.99 1353.0,128.96 1354.0,128.93 1355.0,128.89 1356.0,128.86 1357.0,128.83 1358.0,128.80 1359.0,128.77 1360.0,128.74 1361.0,128.71 1362.0,128.68 1363.0,128.65 1364.0,128.62 1365.0,128.59 1366.0,128.56 1367.0,128.53 1368.0,128.50 1369.0,128.47 1370.0,128.44 1371.0,128.41 1372.0,128.39 1373.0,128.36 1374.0,128.33 1375.0,128.30 1376.0,128.27 1377.0,128.25 1378.0,128.22 1379.0,128.19 1380.0,128.16 1381.0,128.14 1382.0,128.11 1383.0,128.08 1384.0,128.06 1385.0,128.03 1386.0,128.00 1387.0,127.98 1388.0,127.95 1389.0,127.93 1390.0,127.90 1391.0,127.88 1392.0,127.85 1393.0,127.83 1394.0,127.80 1395.0,127.78 1396.0,127.75 1397.0,127.73 1398.0,127.70 1399.0,127.68 1400.0,127.66 1401.0,127.63 1402.0,127.61 1403.0,127.59 1404.0,127.57 1405.0,127.54 1406.0,127.52 1407.0,127.50 1408.0,127.48 1409.0,127.46 1410.0,127.44 1411.0,127.41 1412.0,127.39 1413.0,127.37 1414.0,127.35 1415.0,127.33 1416.0,127.31 1417.0,127.29 1418.0,127.27 1419.0,127.25 1420.0,127.23 1421.0,127.21 1422.0,127.19 1423.0,127.17 1424.0,127.15 1425.0,127.13 1426.0,127.11 1427.0,127.09 1428.0,127.07 1429.0,127.05 1430.0,127.03 1431.0,127.01 1432.0,126.99 1433.0,126.98 1434.0,126.96 1435.0,126.94 1436.0,126.92 1437.0,126.90 1438.0,126.88 1439.0,126.87 1440.0,126.85 1441.0,126.83 1442.0,126.81 1443.0,126.80 1444.0,126.78 1445.0,126.76 1446.0,126.75 1447.0,126.73 1448.0,126.71 1449.0,126.70 1450.0,126.68 1451.0,126.66 1452.0,126.65 1453.0,126.63 1454.0,126.62 1455.0,126.60 1456.0,126.59 1457.0,126.57 1458.0,126.56 1459.0,126.54 1460.0,126.53 1461.0,126.51 1462.0,126.50 1463.0,126.49 1464.0,126.47 1465.0,126.46 1466.0,126.44 1467.0,126.43 1468.0,126.42 1469.0,126.40 1470.0,126.39 1471.0,126.38 1472.0,126.36 1473.0,126.35 1474.0,126.34 1475.0,126.32 1476.0,126.31 1477.0,126.30 1478.0,126.28 1479.0,126.27 1480.0,126.26 1481.0,126.25 1482.0,126.23 1483.0,126.22 1484.0,126.21 1485.0,126.19 1486.0,126.18 1487.0,126.17 1488.0,126.16 1489.0,126.14 1490.0,126.13 1491.0,126.12 1492.0,126.11 1493.0,126.10 1494.0,126.08 1495.0,126.07 1496.0,126.06 1497.0,126.05 1498.0,126.04 1499.0,126.03 1500.0,126.01 1501.0,126.00 1502.0,125.99 1503.0,125.98 1504.0,125.97 1505.0,125.96 1506.0,125.95 1507.0,125.93 1508.0,125.92 1509.0,125.91 1510.0,125.90 1511.0,125.89 1512.0,125.88 1513.0,125.87 1514.0,125.86 1515.0,125.85 1516.0,125.84 1517.0,125.83 1518.0,125.82 1519.0,125.81 1520.0,125.80 1521.0,125.79 1522.0,125.78 1523.0,125.77 1524.0,125.76 1525.0,125.75 1526.0,125.74 1527.0,125.73 1528.0,125.72 1529.0,125.71 1530.0,125.70 1531.0,125.69 1532.0,125.68 1533.0,125.67 1534.0,125.66 1535.0,125.65 1536.0,125.64 1537.0,125.63 1538.0,125.62 1539.0,125.62 1540.0,125.61 1541.0,125.60 1542.0,125.59 1543.0,125.58 1544.0,125.57 1545.0,125.56 1546.0,125.56 1547.0,125.55 1548.0,125.54 1549.0,125.53 1550.0,125.52 1551.0,125.52 1552.0,125.51 1553.0,125.50 1554.0,125.49 1555.0,125.48 1556.0,125.48 1557.0,125.47 1558.0,125.46 1559.0,125.45 1560.0,125.45 1561.0,125.44 1562.0,125.43 1563.0,125.42 1564.0,125.42 1565.0,125.41 1566.0,125.40 1567.0,125.40 1568.0,125.39 1569.0,125.38 1570.0,125.37 1571.0,125.37 1572.0,125.36 1573.0,125.35 1574.0,125.35 1575.0,125.34 1576.0,125.33 1577.0,125.32 1578.0,125.32 1579.0,125.31 1580.0,125.30 1581.0,125.30 1582.0,125.29 1583.0,125.28 1584.0,125.28 1585.0,125.27 1586.0,125.26 1587.0,125.26 1588.0,125.25 1589.0,125.24 1590.0,125.24 1591.0,125.23 1592.0,125.22 1593.0,125.22 1594.0,125.21 1595.0,125.20 1596.0,125.20 1597.0,125.19 1598.0,125.19 1599.0,125.18 1600.0,125.17 1601.0,125.17 1602.0,125.16 1603.0,125.15 1604.0,125.15 1605.0,125.14 1606.0,125.14 1607.0,125.13 1608.0,125.12 1609.0,125.12 1610.0,125.11 1611.0,125.11 1612.0,125.10 1613.0,125.09 1614.0,125.09 1615.0,125.08 1616.0,125.08 1617.0,125.07 1618.0,125.06 1619.0,125.06 1620.0,125.05 1621.0,125.05 1622.0,125.04 1623.0,125.03 1624.0,125.03 1625.0,125.02 1626.0,125.02 1627.0,125.01 1628.0,125.01 1629.0,125.00 1630.0,125.00 1631.0,124.99 1632.0,124.98 1633.0,124.98 1634.0,124.97 1635.0,124.97 1636.0,124.96 1637.0,124.96 1638.0,124.95 1639.0,124.95 1640.0,124.94 1641.0,124.93 1642.0,124.93 1643.0,124.92 1644.0,124.92 1645.0,124.91 1646.0,124.91 1647.0,124.90 1648.0,124.90 1649.0,124.89 1650.0,124.89 1651.0,124.88 1652.0,124.88 1653.0,124.87 1654.0,124.87 1655.0,124.86 1656.0,124.86 1657.0,124.85 1658.0,124.85 1659.0,124.84 1660.0,124.84 1661.0,124.83 1662.0,124.83 1663.0,124.82 1664.0,124.82 1665.0,124.81 1666.0,124.81 1667.0,124.80 1668.0,124.80 1669.0,124.79 1670.0,124.79 1671.0,124.78 1672.0,124.78 1673.0,124.77 1674.0,124.77 1675.0,124.76 1676.0,124.76 1677.0,124.75 1678.0,124.75 1679.0,124.74 1680.0,124.74 1681.0,124.73 1682.0,124.73 1683.0,124.72 1684.0,124.72 1685.0,124.71 1686.0,124.71 1687.0,124.70 1688.0,124.70 1689.0,124.69 1690.0,124.69 1691.0,124.68 1692.0,124.68 1693.0,124.67 1694.0,124.67 1695.0,124.66 1696.0,124.66 1697.0,124.65 1698.0,124.65 1699.0,124.65 1700.0,124.64 1701.0,124.64 1702.0,124.63 1703.0,124.63 1704.0,124.62 1705.0,124.62 1706.0,124.61 1707.0,124.61 1708.0,124.60 1709.0,124.60 1710.0,124.59 1711.0,124.59 1712.0,124.58 1713.0,124.58 1714.0,124.57 1715.0,124.57 1716.0,124.57 1717.0,124.56 1718.0,124.56 1719.0,124.55 1720.0,124.55 1721.0,124.54 1722.0,124.54 1723.0,124.53 1724.0,124.53 1725.0,124.52 1726.0,124.52 1727.0,124.51 1728.0,124.51 1729.0,124.50 1730.0,124.50 1731.0,124.50 1732.0,124.49 1733.0,124.49 1734.0,124.48 1735.0,124.48 1736.0,124.47 1737.0,124.47 1738.0,124.46 1739.0,124.46 1740.0,124.45 1741.0,124.45 1742.0,124.44 1743.0,124.44 1744.0,124.44 1745.0,124.43 1746.0,124.43 1747.0,124.42 1748.0,124.42 1749.0,124.41 1750.0,124.41 1751.0,124.40 1752.0,124.40 1753.0,124.40 1754.0,124.39 1755.0,124.39 1756.0,124.38 1757.0,124.38 1758.0,124.37 1759.0,124.37 1760.0,124.36 1761.0,124.36 1762.0,124.36 1763.0,124.35 1764.0,124.35 1765.0,124.34 1766.0,124.34 1767.0,124.33 1768.0,124.33 1769.0,124.33 1770.0,124.32 1771.0,124.32 1772.0,124.31 1773.0,124.31 1774.0,124.30 1775.0,124.30 1776.0,124.30 1777.0,124.29 1778.0,124.29 1779.0,124.28 1780.0,124.28 1781.0,124.27 1782.0,124.27 1783.0,124.27 1784.0,124.26 1785.0,124.26 1786.0,124.25 1787.0,124.25 1788.0,124.25 1789.0,124.24 1790.0,124.24 1791.0,124.23 1792.0,124.23 1793.0,124.23 1794.0,124.22 1795.0,124.22 1796.0,124.21 1797.0,124.21 1798.0,124.21 1799.0,124.20 1800.0,124.20 1801.0,124.19 1802.0,124.19 1803.0,124.19 1804.0,124.18 1805.0,124.18 1806.0,124.17 1807.0,124.17 1808.0,124.17 1809.0,124.16 1810.0,124.16 1811.0,124.15 1812.0,124.15 1813.0,124.15 1814.0,124.14 1815.0,124.14 1816.0,124.14 1817.0,124.13 1818.0,124.13 1819.0,124.12 1820.0,124.12 1821.0,124.12 1822.0,124.11 1823.0,124.11 1824.0,124.11 1825.0,124.10 1826.0,124.10 1827.0,124.09 1828.0,124.09 1829.0,124.09 1830.0,124.08 1831.0,124.08 1832.0,124.08 1833.0,124.07 1834.0,124.07 1835.0,124.07 1836.0,124.06 1837.0,124.06 1838.0,124.05 1839.0,124.05 1840.0,124.05 1841.0,124.04 1842.0,124.04 1843.0,124.04 1844.0,124.03 1845.0,124.03 1846.0,124.03 1847.0,124.02 1848.0,124.02 1849.0,124.02 1850.0,124.01 1851.0,124.01 1852.0,124.01 1853.0,124.00 1853.8,124.00" fill="none" stroke="#d40000" stroke-width="2" stroke-linejoin="round"/>
<path d="M1075,185.5H1293M1099,209.5H1293" stroke="#fff" stroke-width="6" shape-rendering="crispEdges"/>
<path d="M1075,185.5H1293M1099,209.5H1293" stroke="#0000ff" stroke-width="2" shape-rendering="crispEdges"/>
<g fill="none" stroke="#0000ff" stroke-width="2.9" stroke-linecap="butt">
<path d="M1345.2,214.6H1349.4V180"/>
<path d="M1342.9,189.5H1353.9M1343.1,201.5L1354.8,198.2"/>
<path d="M1356.6,183.2L1375.2,181.2M1356.4,189.7H1378M1366.4,184V215.6"/>
<path d="M1358.8,209.5V195H1375.2V209.5M1358.8,201H1375.2M1358.8,207.8H1375.2"/>
<path d="M1392.9,183.4H1402.8V192"/>
<path d="M1402.3,190Q1400,206 1385.7,213.4M1402.6,193Q1406,207 1417.7,212.3"/>
<path d="M1428,214.6H1432.3V180M1426,189.5H1437.7M1425.4,201.8L1437.2,198.4"/>
<rect x="1442.6" y="182.5" width="12.8" height="5"/>
<rect x="1440.6" y="192.5" width="16.8" height="14.9"/>
<path d="M1440.6,197.4H1457.4M1440.6,202.3H1457.4" stroke-width="2.2"/>
<path d="M1444.6,210.5L1436.1,214.3M1451.1,210.5L1459.6,214.5"/>
<path d="M1476.4,183.6L1470.6,194.4M1474.5,189.2H1496.6M1484.3,181.2V199M1467.2,198.2H1500.8"/>
<path d="M1484.3,198Q1483,210 1468.1,214.5M1484.3,199Q1487,210 1500.6,213.6"/>
<path d="M1511,192.5H1540M1511,202.3H1540" stroke-width="2.8"/>
</g>
<rect x="300" y="302.3" width="17" height="3.2" fill="#00f"/>
<path d="M1556.7,181.7V212.2" stroke="#00f" stroke-width="4.7" fill="none"/><path d="M1551.5,188.8L1556.5,183" stroke="#00f" stroke-width="3.6" fill="none"/>
<rect x="1569.8" y="207.5" width="4.7" height="4.7" fill="#00f"/>
</svg>
<div class="yl" style="top:115px">0dB</div>
<div class="yl" style="top:188px">-5dB</div>
<div class="yl" style="top:262px">-10dB</div>
<div class="yl" style="top:335px">-15dB</div>
<div class="yl" style="top:408px">-20dB</div>
<div class="yl" style="top:482px">-25dB</div>
<div class="yl" style="top:555px">-30dB</div>
<div class="yl" style="top:628px">-35dB</div>
<div class="yl" style="top:702px">-40dB</div>
<div class="yl" style="top:775px">-45dB</div>
<div class="yl" style="top:848px">-50dB</div>
<div class="yl" style="top:922px">-55dB</div>
<div class="yl" style="top:995px">-60dB</div>
<div class="xl" style="left:5.0px">23.5MHz</div>
<div class="xl" style="left:185.9px">24.5MHz</div>
<div class="xl" style="left:366.8px">25.5MHz</div>
<div class="xl" style="left:547.7px">26.5MHz</div>
<div class="xl" style="left:728.6px">27.5MHz</div>
<div class="xl" style="left:909.5px">28.5MHz</div>
<div class="xl" style="left:1090.4px">29.5MHz</div>
<div class="xl" style="left:1271.3px">30.5MHz</div>
<div class="xl" style="left:1452.2px">31.5MHz</div>
<div class="xl" style="left:1633.1px">32.5MHz</div>
<div class="xl" style="left:1814.0px">33.5MHz</div>
<div class="abs" style="left:31.5px;top:87.5px;font-size:11.3px;line-height:14px;color:#000">bpf.asc</div>
<div class="abs" style="left:101.5px;top:86.5px;font-size:11.3px;line-height:14px;color:#000">bpf.raw</div>
<div class="abs" style="left:479.5px;top:106px;font-size:12.5px;font-weight:bold;line-height:16px">V(out)</div>
<div class="abs" style="left:1386.5px;top:106px;font-size:12.5px;font-weight:bold;line-height:16px;color:#d40000">V(in)</div>
<div class="big" style="left:233.5px;top:282px">2</div>
<div class="big" style="left:254.0px;top:282px">8</div>
<div class="big" style="left:274.5px;top:282px">M</div>
<div class="big" style="left:315.5px;top:282px">B</div>
<div class="big" style="left:336.0px;top:282px">P</div>
<div class="big" style="left:356.5px;top:282px">F</div>
<div class="big" style="left:1584.5px;top:175.5px">8</div>
<div class="big" style="left:1646.0px;top:175.5px">B</div>
<div class="big" style="left:1619px;top:183px;font-size:36.5px;line-height:40px;transform:scaleX(1.12)">d</div>
</body></html>
